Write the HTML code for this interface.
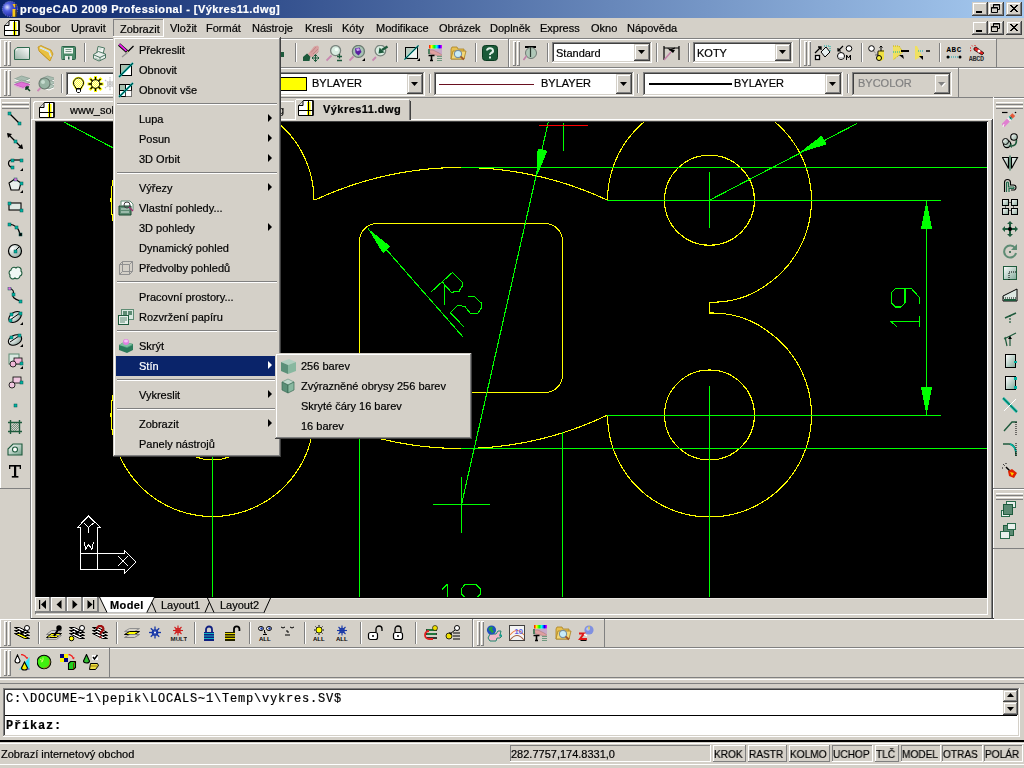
<!DOCTYPE html><html><head><meta charset="utf-8"><style>
html,body{margin:0;padding:0;width:1024px;height:768px;overflow:hidden;background:#D4D0C8;position:relative}
.a{position:absolute;display:block}
.t{position:absolute;white-space:nowrap;will-change:transform;-webkit-text-stroke:0.2px currentColor;}
</style></head><body>
<div class="a" style="left:0px;top:0px;width:1024px;height:18px;background:linear-gradient(to right,#0A246A,#A6CAF0);"></div>
<svg class="a" style="left:1px;top:0px;" width="19" height="18" viewBox="0 0 19 18"><defs><radialGradient id="gl" cx="32%" cy="38%" r="70%"><stop offset="0" stop-color="#E0E4FF"/><stop offset="0.35" stop-color="#5060E0"/><stop offset="1" stop-color="#1820A0"/></radialGradient></defs>
<circle cx="9" cy="9" r="7.6" fill="url(#gl)" stroke="#8890D0" stroke-width="0.9" stroke-dasharray="1 1"/><path d="M11.5 4h4l-2 4z" fill="#F0C020"/><path d="M14 4.5l1.5-0.5-1.5 3.5z" fill="#604000"/><rect x="11.5" y="9" width="3" height="7.8" fill="#F8C818"/><rect x="14.5" y="10" width="1.2" height="6.8" fill="#504010"/></svg>
<div class="t" style="left:20px;top:3px;font-size:11px;line-height:13px;color:#fff;font-family:'Liberation Sans';font-weight:bold;letter-spacing:0.45px;">progeCAD 2009 Professional - [Výkres11.dwg]</div>
<div class="a" style="left:972px;top:2px;width:16px;height:14px;background:#D4D0C8;"></div>
<div class="a" style="left:973px;top:3px;width:14px;height:1px;background:#FFFFFF;"></div>
<div class="a" style="left:973px;top:3px;width:1px;height:12px;background:#FFFFFF;"></div>
<div class="a" style="left:972px;top:15px;width:16px;height:1px;background:#404040;"></div>
<div class="a" style="left:987px;top:2px;width:1px;height:14px;background:#404040;"></div>
<div class="a" style="left:973px;top:14px;width:14px;height:1px;background:#808080;"></div>
<div class="a" style="left:986px;top:3px;width:1px;height:12px;background:#808080;"></div>
<div class="a" style="left:976px;top:11px;width:6px;height:2px;background:#000;"></div>
<div class="a" style="left:988px;top:2px;width:16px;height:14px;background:#D4D0C8;"></div>
<div class="a" style="left:989px;top:3px;width:14px;height:1px;background:#FFFFFF;"></div>
<div class="a" style="left:989px;top:3px;width:1px;height:12px;background:#FFFFFF;"></div>
<div class="a" style="left:988px;top:15px;width:16px;height:1px;background:#404040;"></div>
<div class="a" style="left:1003px;top:2px;width:1px;height:14px;background:#404040;"></div>
<div class="a" style="left:989px;top:14px;width:14px;height:1px;background:#808080;"></div>
<div class="a" style="left:1002px;top:3px;width:1px;height:12px;background:#808080;"></div>
<svg class="a" style="left:988px;top:2px;" width="16" height="14" viewBox="0 0 16 14"><path d="M5.5 2.5h6v5h-6z" stroke="#000" fill="none"/><path d="M5 3h7" stroke="#000"/><path d="M3.5 5.5h6v5h-6z" fill="#D4D0C8" stroke="#000"/><path d="M3 6h7" stroke="#000"/></svg>
<div class="a" style="left:1006px;top:2px;width:16px;height:14px;background:#D4D0C8;"></div>
<div class="a" style="left:1007px;top:3px;width:14px;height:1px;background:#FFFFFF;"></div>
<div class="a" style="left:1007px;top:3px;width:1px;height:12px;background:#FFFFFF;"></div>
<div class="a" style="left:1006px;top:15px;width:16px;height:1px;background:#404040;"></div>
<div class="a" style="left:1021px;top:2px;width:1px;height:14px;background:#404040;"></div>
<div class="a" style="left:1007px;top:14px;width:14px;height:1px;background:#808080;"></div>
<div class="a" style="left:1020px;top:3px;width:1px;height:12px;background:#808080;"></div>
<svg class="a" style="left:1006px;top:2px;" width="16" height="14" viewBox="0 0 16 14"><path d="M4 3l7 7M5 3l7 7M11 3l-7 7M12 3l-7 7" stroke="#000" stroke-width="1" shape-rendering="crispEdges"/></svg>
<div class="a" style="left:0px;top:18px;width:1024px;height:20px;background:#D4D0C8;"></div>
<svg class="a" style="left:4px;top:20px;" width="16" height="16" viewBox="0 0 16 16"><path d="M0.5 15.5V5.5l5-5h9.5v15z" fill="#fff" stroke="#000"/><path d="M5 1v4.5h-4.5" fill="#D8D8D8" stroke="#000"/><rect x="9" y="2" width="3.5" height="13" fill="#FFFF00"/><path d="M10.5 1v14.5M1 10.5h14" stroke="#000"/><path d="M15 0.5v15" stroke="#000" stroke-width="1.6"/><path d="M5.5 0.5h9.5" stroke="#000"/></svg>
<div class="a" style="left:113px;top:19px;width:51px;height:18px;background:#D4D0C8;"></div>
<div class="a" style="left:113px;top:19px;width:51px;height:1px;background:#808080;"></div>
<div class="a" style="left:113px;top:19px;width:1px;height:18px;background:#808080;"></div>
<div class="a" style="left:113px;top:36px;width:51px;height:1px;background:#FFFFFF;"></div>
<div class="a" style="left:163px;top:19px;width:1px;height:18px;background:#FFFFFF;"></div>
<div class="t" style="left:25px;top:22px;font-size:11px;line-height:13px;color:#000;font-family:'Liberation Sans';">Soubor</div>
<div class="t" style="left:71px;top:22px;font-size:11px;line-height:13px;color:#000;font-family:'Liberation Sans';">Upravit</div>
<div class="t" style="left:170px;top:22px;font-size:11px;line-height:13px;color:#000;font-family:'Liberation Sans';">Vložit</div>
<div class="t" style="left:206px;top:22px;font-size:11px;line-height:13px;color:#000;font-family:'Liberation Sans';">Formát</div>
<div class="t" style="left:252px;top:22px;font-size:11px;line-height:13px;color:#000;font-family:'Liberation Sans';">Nástroje</div>
<div class="t" style="left:305px;top:22px;font-size:11px;line-height:13px;color:#000;font-family:'Liberation Sans';">Kresli</div>
<div class="t" style="left:342px;top:22px;font-size:11px;line-height:13px;color:#000;font-family:'Liberation Sans';">Kóty</div>
<div class="t" style="left:376px;top:22px;font-size:11px;line-height:13px;color:#000;font-family:'Liberation Sans';">Modifikace</div>
<div class="t" style="left:439px;top:22px;font-size:11px;line-height:13px;color:#000;font-family:'Liberation Sans';">Obrázek</div>
<div class="t" style="left:490px;top:22px;font-size:11px;line-height:13px;color:#000;font-family:'Liberation Sans';">Doplněk</div>
<div class="t" style="left:540px;top:22px;font-size:11px;line-height:13px;color:#000;font-family:'Liberation Sans';">Express</div>
<div class="t" style="left:591px;top:22px;font-size:11px;line-height:13px;color:#000;font-family:'Liberation Sans';">Okno</div>
<div class="t" style="left:627px;top:22px;font-size:11px;line-height:13px;color:#000;font-family:'Liberation Sans';">Nápověda</div>
<div class="t" style="left:120px;top:23px;font-size:11px;line-height:13px;color:#000;font-family:'Liberation Sans';">Zobrazit</div>
<div class="a" style="left:972px;top:21px;width:16px;height:14px;background:#D4D0C8;"></div>
<div class="a" style="left:973px;top:22px;width:14px;height:1px;background:#FFFFFF;"></div>
<div class="a" style="left:973px;top:22px;width:1px;height:12px;background:#FFFFFF;"></div>
<div class="a" style="left:972px;top:34px;width:16px;height:1px;background:#404040;"></div>
<div class="a" style="left:987px;top:21px;width:1px;height:14px;background:#404040;"></div>
<div class="a" style="left:973px;top:33px;width:14px;height:1px;background:#808080;"></div>
<div class="a" style="left:986px;top:22px;width:1px;height:12px;background:#808080;"></div>
<div class="a" style="left:976px;top:30px;width:6px;height:2px;background:#000;"></div>
<div class="a" style="left:988px;top:21px;width:16px;height:14px;background:#D4D0C8;"></div>
<div class="a" style="left:989px;top:22px;width:14px;height:1px;background:#FFFFFF;"></div>
<div class="a" style="left:989px;top:22px;width:1px;height:12px;background:#FFFFFF;"></div>
<div class="a" style="left:988px;top:34px;width:16px;height:1px;background:#404040;"></div>
<div class="a" style="left:1003px;top:21px;width:1px;height:14px;background:#404040;"></div>
<div class="a" style="left:989px;top:33px;width:14px;height:1px;background:#808080;"></div>
<div class="a" style="left:1002px;top:22px;width:1px;height:12px;background:#808080;"></div>
<svg class="a" style="left:988px;top:21px;" width="16" height="14" viewBox="0 0 16 14"><path d="M5.5 2.5h6v5h-6z" stroke="#000" fill="none"/><path d="M5 3h7" stroke="#000"/><path d="M3.5 5.5h6v5h-6z" fill="#D4D0C8" stroke="#000"/><path d="M3 6h7" stroke="#000"/></svg>
<div class="a" style="left:1006px;top:21px;width:16px;height:14px;background:#D4D0C8;"></div>
<div class="a" style="left:1007px;top:22px;width:14px;height:1px;background:#FFFFFF;"></div>
<div class="a" style="left:1007px;top:22px;width:1px;height:12px;background:#FFFFFF;"></div>
<div class="a" style="left:1006px;top:34px;width:16px;height:1px;background:#404040;"></div>
<div class="a" style="left:1021px;top:21px;width:1px;height:14px;background:#404040;"></div>
<div class="a" style="left:1007px;top:33px;width:14px;height:1px;background:#808080;"></div>
<div class="a" style="left:1020px;top:22px;width:1px;height:12px;background:#808080;"></div>
<svg class="a" style="left:1006px;top:21px;" width="16" height="14" viewBox="0 0 16 14"><path d="M4 3l7 7M5 3l7 7M11 3l-7 7M12 3l-7 7" stroke="#000" stroke-width="1" shape-rendering="crispEdges"/></svg>
<div class="a" style="left:0px;top:38px;width:1024px;height:1px;background:#808080;"></div>
<div class="a" style="left:0px;top:67px;width:1024px;height:1px;background:#808080;"></div>
<div class="a" style="left:0px;top:68px;width:1024px;height:1px;background:#FFFFFF;"></div>
<div class="a" style="left:0px;top:97px;width:1024px;height:1px;background:#808080;"></div>
<div class="a" style="left:0px;top:39px;width:509px;height:29px;background:#D4D0C8;"></div>
<div class="a" style="left:0px;top:39px;width:509px;height:1px;background:#FFFFFF;"></div>
<div class="a" style="left:0px;top:39px;width:1px;height:29px;background:#FFFFFF;"></div>
<div class="a" style="left:0px;top:67px;width:509px;height:1px;background:#808080;"></div>
<div class="a" style="left:508px;top:39px;width:1px;height:29px;background:#808080;"></div>
<div class="a" style="left:4px;top:41px;width:1px;height:25px;background:#FFFFFF;"></div>
<div class="a" style="left:5px;top:41px;width:1px;height:25px;background:#D4D0C8;"></div>
<div class="a" style="left:6px;top:41px;width:1px;height:25px;background:#808080;"></div>
<div class="a" style="left:4px;top:41px;width:3px;height:1px;background:#FFFFFF;"></div>
<div class="a" style="left:4px;top:65px;width:3px;height:1px;background:#808080;"></div>
<div class="a" style="left:8px;top:41px;width:1px;height:25px;background:#FFFFFF;"></div>
<div class="a" style="left:9px;top:41px;width:1px;height:25px;background:#D4D0C8;"></div>
<div class="a" style="left:10px;top:41px;width:1px;height:25px;background:#808080;"></div>
<div class="a" style="left:8px;top:41px;width:3px;height:1px;background:#FFFFFF;"></div>
<div class="a" style="left:8px;top:65px;width:3px;height:1px;background:#808080;"></div>
<svg class="a" style="left:14px;top:47px;" width="17" height="17" viewBox="0 0 17 17"><defs><linearGradient id="gnew" x1="0" y1="1" x2="1" y2="0"><stop offset="0" stop-color="#98B0A4"/><stop offset="1" stop-color="#FFFFFF"/></linearGradient></defs><path d="M3 0.5H15.5V12.5H0.5V3z" fill="url(#gnew)" stroke="#2E6A4E"/><circle cx="2.8" cy="2.8" r="0.8" fill="#fff"/></svg>
<svg class="a" style="left:37px;top:45px;" width="17" height="17" viewBox="0 0 17 17"><path d="M1 2L4 0.5 7 2 14 5 16 9 13 16 2 6z" fill="#E8C040" stroke="#C09020" stroke-width="0.8"/><path d="M3 2.5l9 4 2 5" fill="none" stroke="#F0F8FF" stroke-width="1.6"/><path d="M3 2.5l9 4 2 5" fill="none" stroke="#A0C8E0" stroke-width="0.6"/><path d="M2 6l11 10" stroke="#C89820" stroke-width="0.8"/></svg>
<svg class="a" style="left:61px;top:46px;" width="17" height="17" viewBox="0 0 17 17"><rect x="0.5" y="0.5" width="14" height="13" rx="1" fill="#4A8A68" stroke="#2A6048"/><rect x="3" y="2" width="9" height="5.5" fill="#EEF4F0"/><path d="M4.5 3.5h6M4.5 5.5h6" stroke="#7A9A8A"/><rect x="4" y="10" width="7" height="4" fill="#E8ECEA"/><rect x="7" y="10.5" width="1.5" height="3" fill="#2A6048"/><path d="M1 1v12" stroke="#8AC0A4"/></svg>
<div class="a" style="left:84px;top:43px;width:1px;height:19px;background:#808080;"></div>
<div class="a" style="left:85px;top:43px;width:1px;height:19px;background:#FFFFFF;"></div>
<svg class="a" style="left:93px;top:45px;" width="17" height="17" viewBox="0 0 17 17"><path d="M5 1.5l6.5 1.5-2 8-6-1.5z" fill="#F4F8F4" stroke="#3A6A54" stroke-width="0.9"/><path d="M5.5 4h3" stroke="#B8C8C0"/><path d="M0.5 9.5l5-3 7 2.5v4l-6.5 3-5.5-2.5z" fill="#E8EEEA" stroke="#3A6A54" stroke-width="0.9"/><path d="M1 10l6 2.5 6-3" fill="none" stroke="#3A6A54" stroke-width="0.9"/><path d="M7 12.5v3.5" stroke="#3A6A54" stroke-width="0.8"/><path d="M2 13l4.5 2" stroke="#A8C0B4"/></svg>
<div class="a" style="left:281px;top:52px;width:3px;height:5px;background:#1E5A3C;"></div>
<div class="a" style="left:295px;top:43px;width:1px;height:19px;background:#808080;"></div>
<div class="a" style="left:296px;top:43px;width:1px;height:19px;background:#FFFFFF;"></div>
<svg class="a" style="left:303px;top:45px;" width="17" height="17" viewBox="0 0 17 17"><path d="M0 12L4 8.5 7.5 11 6.5 16H0z" fill="#1E5A3C"/><path d="M5 9L11 1.5 14.5 0.5 16 2 15.5 6 12 9 9.5 12 7 11.5z" fill="#D8A0A0"/><path d="M8 7.5l5-5.5M10 9l5-5M11.5 10.5l4-4" stroke="#B88080" stroke-width="0.7"/><path d="M12.5 9.5v7M9 13h7" stroke="#1E5A3C" stroke-width="1.2"/><path d="M11 11l1.5-1.5 1.5 1.5M11 15l1.5 1.5 1.5-1.5M10.5 11.5L9 13l1.5 1.5M14.5 11.5L16 13l-1.5 1.5" fill="none" stroke="#1E5A3C"/></svg>
<svg class="a" style="left:326px;top:45px;" width="17" height="17" viewBox="0 0 17 17"><circle cx="9.6" cy="5.6" r="5" fill="#D8ECE0" stroke="#7A847E" stroke-width="1.3"/><circle cx="10.5" cy="4.5" r="1.8" fill="#F4FFF8"/><path d="M0.5 15.5L5.5 10.5" stroke="#C888B0" stroke-width="1.8"/><path d="M11 11.5h5M13.5 9v4.5M11 15.5h5" stroke="#1E5A3C" stroke-width="1.3"/></svg>
<svg class="a" style="left:349px;top:45px;" width="17" height="17" viewBox="0 0 17 17"><circle cx="9.4" cy="6.4" r="6" fill="#A8C4B4" stroke="#6A7A70" stroke-width="1.3"/><path d="M6 3.5L10.5 2.5 12.5 7 9.5 10.5 6.5 8z" fill="#5A20A0"/><path d="M7 3.8l3-0.6 1 2-3 1z" fill="#C8A8F0"/><path d="M0.5 15.5L4.5 11.5" stroke="#C888B0" stroke-width="1.8"/><path d="M13 16h3v-3z" fill="#000"/></svg>
<svg class="a" style="left:372px;top:45px;" width="17" height="17" viewBox="0 0 17 17"><circle cx="8.4" cy="5.6" r="5.3" fill="#D8ECE0" stroke="#7A847E" stroke-width="1.3"/><path d="M15.5 1.5L10 5" stroke="#1E5A3C" stroke-width="2.5"/><path d="M6.5 8.5L7.5 2.5 12.5 7.5z" fill="#1E5A3C"/><path d="M0.5 15.5L4 12" stroke="#C888B0" stroke-width="1.8"/></svg>
<div class="a" style="left:396px;top:43px;width:1px;height:19px;background:#808080;"></div>
<div class="a" style="left:397px;top:43px;width:1px;height:19px;background:#FFFFFF;"></div>
<svg class="a" style="left:404px;top:45px;" width="17" height="17" viewBox="0 0 17 17"><rect x="1.5" y="2.5" width="12" height="11" fill="#B8CCC0" stroke="#000"/><path d="M3 12l10-9v10z" fill="#F0F4F0"/><path d="M0.5 14.5l14-14" stroke="#00A8A0" stroke-width="1.5"/><path d="M0.5 14.5l14-14" stroke="#000" stroke-width="0.6"/><path d="M13 16h3v-3z" fill="#000"/></svg>
<svg class="a" style="left:427px;top:45px;" width="17" height="17" viewBox="0 0 17 17"><defs><linearGradient id="rb2"><stop offset="0" stop-color="#F00"/><stop offset=".2" stop-color="#FF0"/><stop offset=".4" stop-color="#0F0"/><stop offset=".6" stop-color="#0FF"/><stop offset=".8" stop-color="#00F"/><stop offset="1" stop-color="#F0F"/></linearGradient></defs><rect x="2" y="0" width="13" height="3.5" fill="url(#rb2)"/><rect x="1" y="4" width="14" height="5" fill="#C8A8C8"/><path d="M1 5h5l6 3 3 2-2 1-9-2z" fill="#E0A0A0" stroke="#A07070" stroke-width="0.5"/><rect x="1" y="4" width="2" height="5" fill="#508060"/><path d="M1.5 10.5h6M4.5 10.5v5M3 15.5h3" stroke="#000" stroke-width="1.6"/><path d="M10 11.5h5M10 13.5h5M10 15.5h5" stroke="#709880" stroke-width="1.2"/></svg>
<svg class="a" style="left:450px;top:45px;" width="17" height="17" viewBox="0 0 17 17"><path d="M1 4l1-2h5l1 2h6v10H1z" fill="#E8C050" stroke="#A88020" stroke-width="0.8"/><path d="M3 6h13l-2 8H1z" fill="#F4D878" stroke="#A88020" stroke-width="0.8"/><circle cx="8" cy="9" r="3.6" fill="#C8ECF8" stroke="#7890A0" stroke-width="1.1"/><path d="M10.5 11.5l3.5 3" stroke="#A05828" stroke-width="1.8"/></svg>
<div class="a" style="left:475px;top:43px;width:1px;height:19px;background:#808080;"></div>
<div class="a" style="left:476px;top:43px;width:1px;height:19px;background:#FFFFFF;"></div>
<svg class="a" style="left:482px;top:45px;" width="17" height="17" viewBox="0 0 17 17"><rect x="0.5" y="0.5" width="15" height="15" rx="3" fill="#1A5A38" stroke="#0A3A20"/><path d="M5 5.5a3 2.5 0 1 1 4 2.5c-1 .6-1 1.2-1 2" fill="none" stroke="#E0F0E8" stroke-width="2"/><rect x="7" y="11.5" width="2" height="2" fill="#E0F0E8"/></svg>
<div class="a" style="left:509px;top:39px;width:291px;height:29px;background:#D4D0C8;"></div>
<div class="a" style="left:509px;top:39px;width:291px;height:1px;background:#FFFFFF;"></div>
<div class="a" style="left:509px;top:39px;width:1px;height:29px;background:#FFFFFF;"></div>
<div class="a" style="left:509px;top:67px;width:291px;height:1px;background:#808080;"></div>
<div class="a" style="left:799px;top:39px;width:1px;height:29px;background:#808080;"></div>
<div class="a" style="left:513px;top:41px;width:1px;height:25px;background:#FFFFFF;"></div>
<div class="a" style="left:514px;top:41px;width:1px;height:25px;background:#D4D0C8;"></div>
<div class="a" style="left:515px;top:41px;width:1px;height:25px;background:#808080;"></div>
<div class="a" style="left:513px;top:41px;width:3px;height:1px;background:#FFFFFF;"></div>
<div class="a" style="left:513px;top:65px;width:3px;height:1px;background:#808080;"></div>
<div class="a" style="left:517px;top:41px;width:1px;height:25px;background:#FFFFFF;"></div>
<div class="a" style="left:518px;top:41px;width:1px;height:25px;background:#D4D0C8;"></div>
<div class="a" style="left:519px;top:41px;width:1px;height:25px;background:#808080;"></div>
<div class="a" style="left:517px;top:41px;width:3px;height:1px;background:#FFFFFF;"></div>
<div class="a" style="left:517px;top:65px;width:3px;height:1px;background:#808080;"></div>
<svg class="a" style="left:523px;top:45px;" width="17" height="17" viewBox="0 0 17 17"><path d="M2 1h11v2H2z" fill="#000"/><circle cx="8" cy="8" r="5.5" fill="#B0C8B8" stroke="#707A74"/><path d="M7.5 2v10" stroke="#2A3A30" stroke-width="1.2"/><path d="M0.5 15l3-4" stroke="#C080A8" stroke-width="1.6"/></svg>
<div class="a" style="left:547px;top:43px;width:1px;height:19px;background:#808080;"></div>
<div class="a" style="left:548px;top:43px;width:1px;height:19px;background:#FFFFFF;"></div>
<div class="a" style="left:552px;top:42px;width:100px;height:21px;background:#FFFFFF;"></div>
<div class="a" style="left:552px;top:42px;width:99px;height:1px;background:#808080;"></div>
<div class="a" style="left:552px;top:42px;width:1px;height:20px;background:#808080;"></div>
<div class="a" style="left:553px;top:43px;width:97px;height:1px;background:#404040;"></div>
<div class="a" style="left:553px;top:43px;width:1px;height:18px;background:#404040;"></div>
<div class="a" style="left:552px;top:62px;width:100px;height:1px;background:#FFFFFF;"></div>
<div class="a" style="left:651px;top:42px;width:1px;height:21px;background:#FFFFFF;"></div>
<div class="a" style="left:553px;top:61px;width:98px;height:1px;background:#D4D0C8;"></div>
<div class="a" style="left:650px;top:43px;width:1px;height:19px;background:#D4D0C8;"></div>
<div class="a" style="left:634px;top:44px;width:16px;height:17px;background:#D4D0C8;"></div>
<div class="a" style="left:635px;top:45px;width:14px;height:1px;background:#FFFFFF;"></div>
<div class="a" style="left:635px;top:45px;width:1px;height:15px;background:#FFFFFF;"></div>
<div class="a" style="left:634px;top:60px;width:16px;height:1px;background:#404040;"></div>
<div class="a" style="left:649px;top:44px;width:1px;height:17px;background:#404040;"></div>
<div class="a" style="left:635px;top:59px;width:14px;height:1px;background:#808080;"></div>
<div class="a" style="left:648px;top:45px;width:1px;height:15px;background:#808080;"></div>
<svg class="a" style="left:634px;top:44px;" width="16" height="17" viewBox="0 0 16 17"><path d="M4 6h7l-3.5 4z" fill="#000"/></svg>
<div class="t" style="left:556px;top:47px;font-size:11px;line-height:13px;color:#000;font-family:'Liberation Sans';">Standard</div>
<div class="a" style="left:656px;top:43px;width:1px;height:19px;background:#808080;"></div>
<div class="a" style="left:657px;top:43px;width:1px;height:19px;background:#FFFFFF;"></div>
<svg class="a" style="left:663px;top:45px;" width="17" height="17" viewBox="0 0 17 17"><path d="M1 1v14M16 1v14M1 3h15" stroke="#000" stroke-width="1.2"/><path d="M4 3l8 2-2 3z" fill="#000"/><path d="M6 5l6-2" stroke="#000"/><path d="M1 15l7-8" stroke="#C080A8" stroke-width="1.5"/></svg>
<div class="a" style="left:688px;top:43px;width:1px;height:19px;background:#808080;"></div>
<div class="a" style="left:689px;top:43px;width:1px;height:19px;background:#FFFFFF;"></div>
<div class="a" style="left:693px;top:42px;width:100px;height:21px;background:#FFFFFF;"></div>
<div class="a" style="left:693px;top:42px;width:99px;height:1px;background:#808080;"></div>
<div class="a" style="left:693px;top:42px;width:1px;height:20px;background:#808080;"></div>
<div class="a" style="left:694px;top:43px;width:97px;height:1px;background:#404040;"></div>
<div class="a" style="left:694px;top:43px;width:1px;height:18px;background:#404040;"></div>
<div class="a" style="left:693px;top:62px;width:100px;height:1px;background:#FFFFFF;"></div>
<div class="a" style="left:792px;top:42px;width:1px;height:21px;background:#FFFFFF;"></div>
<div class="a" style="left:694px;top:61px;width:98px;height:1px;background:#D4D0C8;"></div>
<div class="a" style="left:791px;top:43px;width:1px;height:19px;background:#D4D0C8;"></div>
<div class="a" style="left:775px;top:44px;width:16px;height:17px;background:#D4D0C8;"></div>
<div class="a" style="left:776px;top:45px;width:14px;height:1px;background:#FFFFFF;"></div>
<div class="a" style="left:776px;top:45px;width:1px;height:15px;background:#FFFFFF;"></div>
<div class="a" style="left:775px;top:60px;width:16px;height:1px;background:#404040;"></div>
<div class="a" style="left:790px;top:44px;width:1px;height:17px;background:#404040;"></div>
<div class="a" style="left:776px;top:59px;width:14px;height:1px;background:#808080;"></div>
<div class="a" style="left:789px;top:45px;width:1px;height:15px;background:#808080;"></div>
<svg class="a" style="left:775px;top:44px;" width="16" height="17" viewBox="0 0 16 17"><path d="M4 6h7l-3.5 4z" fill="#000"/></svg>
<div class="t" style="left:697px;top:47px;font-size:11px;line-height:13px;color:#000;font-family:'Liberation Sans';">KOTY</div>
<div class="a" style="left:800px;top:39px;width:197px;height:29px;background:#D4D0C8;"></div>
<div class="a" style="left:800px;top:39px;width:197px;height:1px;background:#FFFFFF;"></div>
<div class="a" style="left:800px;top:39px;width:1px;height:29px;background:#FFFFFF;"></div>
<div class="a" style="left:800px;top:67px;width:197px;height:1px;background:#808080;"></div>
<div class="a" style="left:996px;top:39px;width:1px;height:29px;background:#808080;"></div>
<div class="a" style="left:804px;top:41px;width:1px;height:25px;background:#FFFFFF;"></div>
<div class="a" style="left:805px;top:41px;width:1px;height:25px;background:#D4D0C8;"></div>
<div class="a" style="left:806px;top:41px;width:1px;height:25px;background:#808080;"></div>
<div class="a" style="left:804px;top:41px;width:3px;height:1px;background:#FFFFFF;"></div>
<div class="a" style="left:804px;top:65px;width:3px;height:1px;background:#808080;"></div>
<div class="a" style="left:808px;top:41px;width:1px;height:25px;background:#FFFFFF;"></div>
<div class="a" style="left:809px;top:41px;width:1px;height:25px;background:#D4D0C8;"></div>
<div class="a" style="left:810px;top:41px;width:1px;height:25px;background:#808080;"></div>
<div class="a" style="left:808px;top:41px;width:3px;height:1px;background:#FFFFFF;"></div>
<div class="a" style="left:808px;top:65px;width:3px;height:1px;background:#808080;"></div>
<svg class="a" style="left:814px;top:45px;" width="17" height="17" viewBox="0 0 17 17"><path d="M1 8l6-6M4 2h3v3" stroke="#000" stroke-width="1.3" fill="none"/><rect x="1.5" y="10.5" width="4" height="4" fill="#fff" stroke="#000" stroke-width="1.3"/><path d="M12 2l4 5-5 5-4-5z" fill="#E8F0F0" stroke="#000"/><path d="M10 1h6v6" stroke="#00B0A8" stroke-dasharray="1 1" fill="none"/></svg>
<svg class="a" style="left:836px;top:45px;" width="17" height="17" viewBox="0 0 17 17"><path d="M7 1l-5 5M2 3v3h3" stroke="#000" stroke-width="1.2" fill="none"/><circle cx="13" cy="3.5" r="2.8" fill="#fff" stroke="#000"/><circle cx="5" cy="11" r="3.5" fill="#fff" stroke="#000"/><path d="M2 12a3.5 3.5 0 0 0 6 0" fill="#D0D0D0"/><path d="M10.5 15v-5l2 3 2-3v5" stroke="#000" fill="none" stroke-width="1"/></svg>
<div class="a" style="left:861px;top:43px;width:1px;height:19px;background:#808080;"></div>
<div class="a" style="left:862px;top:43px;width:1px;height:19px;background:#FFFFFF;"></div>
<svg class="a" style="left:868px;top:45px;" width="17" height="17" viewBox="0 0 17 17"><circle cx="3.5" cy="3.5" r="2.8" fill="#fff" stroke="#000"/><path d="M5.5 6l5 5" stroke="#606060" stroke-dasharray="1 1"/><path d="M7 10h3v-3" fill="none" stroke="#606060"/><path d="M10 6v9l3 1 3-2V5z" fill="#F0E040"/><path d="M10 6h6M10 6v9" stroke="#000" stroke-width="0.8" fill="none"/><circle cx="11" cy="13" r="2.5" fill="#F8F040" stroke="#000"/><path d="M13 1v5M11.5 2.5L13 1l1.5 1.5" stroke="#000" fill="none"/></svg>
<svg class="a" style="left:892px;top:45px;" width="17" height="17" viewBox="0 0 17 17"><path d="M1 1h6l4 6-10 8z" fill="#F0E060"/><path d="M1 1h6l4 6-10 8" fill="none" stroke="#C8B000" stroke-dasharray="1 1"/><path d="M1 7h8" stroke="#00B0B0" stroke-dasharray="1 1"/><path d="M9 6h8" stroke="#000" stroke-width="2"/><path d="M7 10l5 4-1-4z" fill="#000"/></svg>
<svg class="a" style="left:914px;top:45px;" width="17" height="17" viewBox="0 0 17 17"><path d="M1 1h2l5 10-7 4z" fill="#F0E060"/><path d="M4 6h6" stroke="#00B0B0" stroke-dasharray="1 1"/><path d="M12 6h4" stroke="#000" stroke-width="1.5"/><path d="M5 11l4 4v-4z" fill="#000"/></svg>
<div class="a" style="left:939px;top:43px;width:1px;height:19px;background:#808080;"></div>
<div class="a" style="left:940px;top:43px;width:1px;height:19px;background:#FFFFFF;"></div>
<svg class="a" style="left:946px;top:45px;" width="17" height="17" viewBox="0 0 17 17"><text x="0.5" y="7" font-size="7.5" font-family="Liberation Mono" font-weight="bold" letter-spacing="0.6" fill="#000">ABC</text><path d="M3 12h10" stroke="#00A0B0" stroke-dasharray="1 1"/><circle cx="2" cy="12" r="1.5"/><circle cx="14" cy="12" r="1.5"/></svg>
<svg class="a" style="left:969px;top:45px;" width="17" height="17" viewBox="0 0 17 17"><path d="M1 3h2M3 0.5l1 1.5M6 0v2M1 6l2-1" stroke="#E00000" stroke-width="1" stroke-dasharray="1 1"/><path d="M5 3l2-1 8 6-2 2-8-5z" fill="#E82020" stroke="#000" stroke-width="0.7"/><circle cx="10" cy="6" r="1.5" fill="#fff"/><text x="-0.3" y="16" font-size="6.8" font-family="Liberation Mono" font-weight="bold" letter-spacing="-0.3" fill="#303030">ABCD</text></svg>
<div class="a" style="left:0px;top:68px;width:959px;height:30px;background:#D4D0C8;"></div>
<div class="a" style="left:0px;top:68px;width:959px;height:1px;background:#FFFFFF;"></div>
<div class="a" style="left:0px;top:68px;width:1px;height:30px;background:#FFFFFF;"></div>
<div class="a" style="left:0px;top:97px;width:959px;height:1px;background:#808080;"></div>
<div class="a" style="left:958px;top:68px;width:1px;height:30px;background:#808080;"></div>
<div class="a" style="left:4px;top:70px;width:1px;height:26px;background:#FFFFFF;"></div>
<div class="a" style="left:5px;top:70px;width:1px;height:26px;background:#D4D0C8;"></div>
<div class="a" style="left:6px;top:70px;width:1px;height:26px;background:#808080;"></div>
<div class="a" style="left:4px;top:70px;width:3px;height:1px;background:#FFFFFF;"></div>
<div class="a" style="left:4px;top:95px;width:3px;height:1px;background:#808080;"></div>
<div class="a" style="left:8px;top:70px;width:1px;height:26px;background:#FFFFFF;"></div>
<div class="a" style="left:9px;top:70px;width:1px;height:26px;background:#D4D0C8;"></div>
<div class="a" style="left:10px;top:70px;width:1px;height:26px;background:#808080;"></div>
<div class="a" style="left:8px;top:70px;width:3px;height:1px;background:#FFFFFF;"></div>
<div class="a" style="left:8px;top:95px;width:3px;height:1px;background:#808080;"></div>
<svg class="a" style="left:14px;top:75px;" width="17" height="17" viewBox="0 0 17 17"><path d="M0.5 4.0L7.5 1.0L16 3.5L9 6.5z" fill="#A8BCB0" stroke="#8AA094" stroke-width="0.8"/><path d="M0.5 4.5L9 7.5L16 4.5" fill="none" stroke="#fff" stroke-width="1"/><path d="M0.5 8.0L7.5 5.0L16 7.5L9 10.5z" fill="#B4C8BC" stroke="#8AA094" stroke-width="0.8"/><path d="M0.5 8.5L9 11.5L16 8.5" fill="none" stroke="#fff" stroke-width="1"/><path d="M0.5 9.5L7.5 7L16 9.5L9 12.5z" fill="#E070D8" stroke="#C050B8" stroke-width="0.8"/><path d="M0.5 10.5L9 13.5L16 10.5" fill="none" stroke="#E8A0E0" stroke-width="1"/><path d="M12.5 12.5l3.5 3.5M12 12h3M12 12v3" stroke="#0A3A20" stroke-width="1.5"/></svg>
<svg class="a" style="left:37px;top:75px;" width="17" height="17" viewBox="0 0 17 17"><g transform="translate(3 0)"><path d="M0.5 4.0L7.5 1.0L16 3.5L9 6.5z" fill="#A8BCB0" stroke="#8AA094" stroke-width="0.8"/><path d="M0.5 4.5L9 7.5L16 4.5" fill="none" stroke="#fff" stroke-width="1"/><path d="M0.5 8.0L7.5 5.0L16 7.5L9 10.5z" fill="#B4C8BC" stroke="#8AA094" stroke-width="0.8"/><path d="M0.5 8.5L9 11.5L16 8.5" fill="none" stroke="#fff" stroke-width="1"/><path d="M0.5 11.5L7.5 8.5L16 11L9 14z" fill="#B4C8BC" stroke="#8AA094" stroke-width="0.8"/><path d="M0.5 12L9 15L16 12" fill="none" stroke="#fff" stroke-width="1"/></g><circle cx="7.5" cy="8.5" r="5.5" fill="#98B4A4" stroke="#6A7A70" stroke-width="1.1"/><circle cx="6" cy="7" r="2" fill="#C8DCD0"/><path d="M0.5 16L3.5 13" stroke="#D088B8" stroke-width="1.8"/></svg>
<div class="a" style="left:61px;top:74px;width:1px;height:19px;background:#808080;"></div>
<div class="a" style="left:62px;top:74px;width:1px;height:19px;background:#FFFFFF;"></div>
<div class="a" style="left:66px;top:72px;width:190px;height:24px;background:#FFFFFF;"></div>
<div class="a" style="left:66px;top:72px;width:189px;height:1px;background:#808080;"></div>
<div class="a" style="left:66px;top:72px;width:1px;height:23px;background:#808080;"></div>
<div class="a" style="left:67px;top:73px;width:187px;height:1px;background:#404040;"></div>
<div class="a" style="left:67px;top:73px;width:1px;height:21px;background:#404040;"></div>
<div class="a" style="left:66px;top:95px;width:190px;height:1px;background:#FFFFFF;"></div>
<div class="a" style="left:255px;top:72px;width:1px;height:24px;background:#FFFFFF;"></div>
<div class="a" style="left:67px;top:94px;width:188px;height:1px;background:#D4D0C8;"></div>
<div class="a" style="left:254px;top:73px;width:1px;height:22px;background:#D4D0C8;"></div>
<div class="a" style="left:238px;top:74px;width:16px;height:20px;background:#D4D0C8;"></div>
<div class="a" style="left:239px;top:75px;width:14px;height:1px;background:#FFFFFF;"></div>
<div class="a" style="left:239px;top:75px;width:1px;height:18px;background:#FFFFFF;"></div>
<div class="a" style="left:238px;top:93px;width:16px;height:1px;background:#404040;"></div>
<div class="a" style="left:253px;top:74px;width:1px;height:20px;background:#404040;"></div>
<div class="a" style="left:239px;top:92px;width:14px;height:1px;background:#808080;"></div>
<div class="a" style="left:252px;top:75px;width:1px;height:18px;background:#808080;"></div>
<svg class="a" style="left:238px;top:74px;" width="16" height="20" viewBox="0 0 16 20"><path d="M4 8h7l-3.5 4z" fill="#000"/></svg>
<svg class="a" style="left:72px;top:76px;" width="14" height="17" viewBox="0 0 14 17"><defs><pattern id="chk" width="2" height="2" patternUnits="userSpaceOnUse"><rect width="2" height="2" fill="#FFFF40"/><rect width="1" height="1" fill="#FFFFE0"/><rect x="1" y="1" width="1" height="1" fill="#FFFFE0"/></pattern></defs><path d="M3 10.5a5 5 0 1 1 7 0l-1 2h-5z" fill="url(#chk)" stroke="#FFFF00" stroke-width="2.2"/><path d="M3 10.5a5 5 0 1 1 7 0l-1 2h-5z" fill="url(#chk)" stroke="#000" stroke-width="1"/><path d="M4.5 13h4v2.5l-1 1h-2l-1-1z" fill="#fff" stroke="#000"/></svg>
<svg class="a" style="left:87px;top:75px;" width="17" height="18" viewBox="0 0 17 18"><path d="M8.5 1v16M0.5 9h16M2.5 3l12 12M14.5 3l-12 12" stroke="#FFFF00" stroke-width="3"/><circle cx="8.5" cy="9" r="5" fill="#FFFF00"/><path d="M8.5 2v14M1.5 9h14M3.5 4l10 10M13.5 4l-10 10" stroke="#000" stroke-width="1.3"/><circle cx="8.5" cy="9" r="4.3" fill="url(#chk)" stroke="#000"/></svg>
<svg class="a" style="left:104px;top:76px;" width="11" height="17" viewBox="0 0 11 17"><path d="M6 1v14M1 4l10 8M11 4L1 12" stroke="#C0C0C0" stroke-width="1.2" stroke-dasharray="1.5 0.8"/><circle cx="6" cy="8" r="2.5" fill="none" stroke="#C0C0C0"/></svg>
<div class="a" style="left:262px;top:74px;width:1px;height:19px;background:#808080;"></div>
<div class="a" style="left:263px;top:74px;width:1px;height:19px;background:#FFFFFF;"></div>
<div class="a" style="left:267px;top:72px;width:158px;height:24px;background:#FFFFFF;"></div>
<div class="a" style="left:267px;top:72px;width:157px;height:1px;background:#808080;"></div>
<div class="a" style="left:267px;top:72px;width:1px;height:23px;background:#808080;"></div>
<div class="a" style="left:268px;top:73px;width:155px;height:1px;background:#404040;"></div>
<div class="a" style="left:268px;top:73px;width:1px;height:21px;background:#404040;"></div>
<div class="a" style="left:267px;top:95px;width:158px;height:1px;background:#FFFFFF;"></div>
<div class="a" style="left:424px;top:72px;width:1px;height:24px;background:#FFFFFF;"></div>
<div class="a" style="left:268px;top:94px;width:156px;height:1px;background:#D4D0C8;"></div>
<div class="a" style="left:423px;top:73px;width:1px;height:22px;background:#D4D0C8;"></div>
<div class="a" style="left:407px;top:74px;width:16px;height:20px;background:#D4D0C8;"></div>
<div class="a" style="left:408px;top:75px;width:14px;height:1px;background:#FFFFFF;"></div>
<div class="a" style="left:408px;top:75px;width:1px;height:18px;background:#FFFFFF;"></div>
<div class="a" style="left:407px;top:93px;width:16px;height:1px;background:#404040;"></div>
<div class="a" style="left:422px;top:74px;width:1px;height:20px;background:#404040;"></div>
<div class="a" style="left:408px;top:92px;width:14px;height:1px;background:#808080;"></div>
<div class="a" style="left:421px;top:75px;width:1px;height:18px;background:#808080;"></div>
<svg class="a" style="left:407px;top:74px;" width="16" height="20" viewBox="0 0 16 20"><path d="M4 8h7l-3.5 4z" fill="#000"/></svg>
<div class="a" style="left:272px;top:77px;width:35px;height:14px;background:#000;"></div>
<div class="a" style="left:273px;top:78px;width:33px;height:12px;background:#FFFF00;"></div>
<div class="t" style="left:312px;top:77px;font-size:11px;line-height:13px;color:#000;font-family:'Liberation Sans';">BYLAYER</div>
<div class="a" style="left:429px;top:74px;width:1px;height:19px;background:#808080;"></div>
<div class="a" style="left:430px;top:74px;width:1px;height:19px;background:#FFFFFF;"></div>
<div class="a" style="left:434px;top:72px;width:200px;height:24px;background:#FFFFFF;"></div>
<div class="a" style="left:434px;top:72px;width:199px;height:1px;background:#808080;"></div>
<div class="a" style="left:434px;top:72px;width:1px;height:23px;background:#808080;"></div>
<div class="a" style="left:435px;top:73px;width:197px;height:1px;background:#404040;"></div>
<div class="a" style="left:435px;top:73px;width:1px;height:21px;background:#404040;"></div>
<div class="a" style="left:434px;top:95px;width:200px;height:1px;background:#FFFFFF;"></div>
<div class="a" style="left:633px;top:72px;width:1px;height:24px;background:#FFFFFF;"></div>
<div class="a" style="left:435px;top:94px;width:198px;height:1px;background:#D4D0C8;"></div>
<div class="a" style="left:632px;top:73px;width:1px;height:22px;background:#D4D0C8;"></div>
<div class="a" style="left:616px;top:74px;width:16px;height:20px;background:#D4D0C8;"></div>
<div class="a" style="left:617px;top:75px;width:14px;height:1px;background:#FFFFFF;"></div>
<div class="a" style="left:617px;top:75px;width:1px;height:18px;background:#FFFFFF;"></div>
<div class="a" style="left:616px;top:93px;width:16px;height:1px;background:#404040;"></div>
<div class="a" style="left:631px;top:74px;width:1px;height:20px;background:#404040;"></div>
<div class="a" style="left:617px;top:92px;width:14px;height:1px;background:#808080;"></div>
<div class="a" style="left:630px;top:75px;width:1px;height:18px;background:#808080;"></div>
<svg class="a" style="left:616px;top:74px;" width="16" height="20" viewBox="0 0 16 20"><path d="M4 8h7l-3.5 4z" fill="#000"/></svg>
<div class="a" style="left:439px;top:84px;width:95px;height:1px;background:#6A1020;"></div>
<div class="t" style="left:541px;top:77px;font-size:11px;line-height:13px;color:#000;font-family:'Liberation Sans';">BYLAYER</div>
<div class="a" style="left:637px;top:74px;width:1px;height:19px;background:#808080;"></div>
<div class="a" style="left:638px;top:74px;width:1px;height:19px;background:#FFFFFF;"></div>
<div class="a" style="left:643px;top:72px;width:200px;height:24px;background:#FFFFFF;"></div>
<div class="a" style="left:643px;top:72px;width:199px;height:1px;background:#808080;"></div>
<div class="a" style="left:643px;top:72px;width:1px;height:23px;background:#808080;"></div>
<div class="a" style="left:644px;top:73px;width:197px;height:1px;background:#404040;"></div>
<div class="a" style="left:644px;top:73px;width:1px;height:21px;background:#404040;"></div>
<div class="a" style="left:643px;top:95px;width:200px;height:1px;background:#FFFFFF;"></div>
<div class="a" style="left:842px;top:72px;width:1px;height:24px;background:#FFFFFF;"></div>
<div class="a" style="left:644px;top:94px;width:198px;height:1px;background:#D4D0C8;"></div>
<div class="a" style="left:841px;top:73px;width:1px;height:22px;background:#D4D0C8;"></div>
<div class="a" style="left:825px;top:74px;width:16px;height:20px;background:#D4D0C8;"></div>
<div class="a" style="left:826px;top:75px;width:14px;height:1px;background:#FFFFFF;"></div>
<div class="a" style="left:826px;top:75px;width:1px;height:18px;background:#FFFFFF;"></div>
<div class="a" style="left:825px;top:93px;width:16px;height:1px;background:#404040;"></div>
<div class="a" style="left:840px;top:74px;width:1px;height:20px;background:#404040;"></div>
<div class="a" style="left:826px;top:92px;width:14px;height:1px;background:#808080;"></div>
<div class="a" style="left:839px;top:75px;width:1px;height:18px;background:#808080;"></div>
<svg class="a" style="left:825px;top:74px;" width="16" height="20" viewBox="0 0 16 20"><path d="M4 8h7l-3.5 4z" fill="#000"/></svg>
<div class="a" style="left:649px;top:83px;width:83px;height:1px;background:#000;"></div>
<div class="a" style="left:649px;top:84px;width:83px;height:1px;background:#000;"></div>
<div class="t" style="left:734px;top:77px;font-size:11px;line-height:13px;color:#000;font-family:'Liberation Sans';">BYLAYER</div>
<div class="a" style="left:847px;top:74px;width:1px;height:19px;background:#808080;"></div>
<div class="a" style="left:848px;top:74px;width:1px;height:19px;background:#FFFFFF;"></div>
<div class="a" style="left:852px;top:72px;width:100px;height:24px;background:#D4D0C8;"></div>
<div class="a" style="left:852px;top:72px;width:99px;height:1px;background:#808080;"></div>
<div class="a" style="left:852px;top:72px;width:1px;height:23px;background:#808080;"></div>
<div class="a" style="left:853px;top:73px;width:97px;height:1px;background:#404040;"></div>
<div class="a" style="left:853px;top:73px;width:1px;height:21px;background:#404040;"></div>
<div class="a" style="left:852px;top:95px;width:100px;height:1px;background:#FFFFFF;"></div>
<div class="a" style="left:951px;top:72px;width:1px;height:24px;background:#FFFFFF;"></div>
<div class="a" style="left:853px;top:94px;width:98px;height:1px;background:#D4D0C8;"></div>
<div class="a" style="left:950px;top:73px;width:1px;height:22px;background:#D4D0C8;"></div>
<div class="a" style="left:934px;top:74px;width:16px;height:20px;background:#D4D0C8;"></div>
<div class="a" style="left:935px;top:75px;width:14px;height:1px;background:#FFFFFF;"></div>
<div class="a" style="left:935px;top:75px;width:1px;height:18px;background:#FFFFFF;"></div>
<div class="a" style="left:934px;top:93px;width:16px;height:1px;background:#404040;"></div>
<div class="a" style="left:949px;top:74px;width:1px;height:20px;background:#404040;"></div>
<div class="a" style="left:935px;top:92px;width:14px;height:1px;background:#808080;"></div>
<div class="a" style="left:948px;top:75px;width:1px;height:18px;background:#808080;"></div>
<svg class="a" style="left:934px;top:74px;" width="16" height="20" viewBox="0 0 16 20"><path d="M5 9h7l-3.5 4z" fill="#fff"/><path d="M4 8h7l-3.5 4z" fill="#808080"/></svg>
<div class="t" style="left:858px;top:77px;font-size:11px;line-height:13px;color:#808080;font-family:'Liberation Sans';">BYCOLOR</div>
<div class="a" style="left:0px;top:98px;width:31px;height:391px;background:#D4D0C8;"></div>
<div class="a" style="left:0px;top:98px;width:31px;height:1px;background:#FFFFFF;"></div>
<div class="a" style="left:0px;top:98px;width:1px;height:391px;background:#FFFFFF;"></div>
<div class="a" style="left:0px;top:488px;width:31px;height:1px;background:#808080;"></div>
<div class="a" style="left:30px;top:98px;width:1px;height:391px;background:#808080;"></div>
<div class="a" style="left:2px;top:102px;width:27px;height:1px;background:#FFFFFF;"></div>
<div class="a" style="left:2px;top:103px;width:27px;height:1px;background:#D4D0C8;"></div>
<div class="a" style="left:2px;top:104px;width:27px;height:1px;background:#808080;"></div>
<div class="a" style="left:2px;top:106px;width:27px;height:1px;background:#FFFFFF;"></div>
<div class="a" style="left:2px;top:107px;width:27px;height:1px;background:#D4D0C8;"></div>
<div class="a" style="left:2px;top:108px;width:27px;height:1px;background:#808080;"></div>
<svg class="a" style="left:7px;top:111px;" width="17" height="17" viewBox="0 0 17 17"><path d="M2 2l10 10" stroke="#000" stroke-width="1.2"/><rect x="1" y="1" width="3" height="3" fill="#00B0A0" stroke="#005850" stroke-width="0.5"/><rect x="11" y="11" width="3" height="3" fill="#00B0A0" stroke="#005850" stroke-width="0.5"/></svg>
<svg class="a" style="left:7px;top:133px;" width="17" height="17" viewBox="0 0 17 17"><path d="M1 1l14 14" stroke="#000" stroke-width="1.2"/><path d="M0 0l5 1-4 4zM16 16l-5-1 4-4z" fill="#000"/><rect x="7" y="7" width="3" height="3" fill="#00B0A0" stroke="#005850" stroke-width="0.5"/></svg>
<svg class="a" style="left:7px;top:155px;" width="17" height="17" viewBox="0 0 17 17"><path d="M5 5a3.5 3.5 0 0 0 0 7" fill="none" stroke="#000" stroke-width="1.2"/><path d="M5 5h9" stroke="#000" stroke-width="1.2"/><rect x="4" y="4" width="3" height="3" fill="#00B0A0" stroke="#005850" stroke-width="0.5"/><rect x="13" y="4" width="3" height="3" fill="#00B0A0" stroke="#005850" stroke-width="0.5"/><rect x="4" y="11" width="3" height="3" fill="#00B0A0" stroke="#005850" stroke-width="0.5"/><path d="M16 16h-3l3-3z" fill="#000"/></svg>
<svg class="a" style="left:7px;top:177px;" width="17" height="17" viewBox="0 0 17 17"><path d="M8 2l6 4-2 7H4L2 6z" fill="#E8F0EC" stroke="#000" stroke-width="1.1"/><rect x="7" y="1" width="3" height="3" fill="#E070E0" stroke="#005850" stroke-width="0.5"/><rect x="13" y="5" width="3" height="3" fill="#00B0A0" stroke="#005850" stroke-width="0.5"/><path d="M16 16h-3l3-3z" fill="#000"/></svg>
<svg class="a" style="left:7px;top:199px;" width="17" height="17" viewBox="0 0 17 17"><rect x="2" y="4" width="12" height="7" fill="#E0E8E4" stroke="#000" stroke-width="1.1"/><rect x="1" y="3" width="3" height="3" fill="#00B0A0" stroke="#005850" stroke-width="0.5"/><rect x="13" y="10" width="3" height="3" fill="#00B0A0" stroke="#005850" stroke-width="0.5"/></svg>
<svg class="a" style="left:7px;top:221px;" width="17" height="17" viewBox="0 0 17 17"><path d="M2 3q9 1 11 10" fill="none" stroke="#000" stroke-width="1.2"/><rect x="1" y="2" width="3" height="3" fill="#00B0A0" stroke="#005850" stroke-width="0.5"/><rect x="8" y="5" width="3" height="3" fill="#00B0A0" stroke="#005850" stroke-width="0.5"/><rect x="12" y="12" width="3" height="3" fill="#000" stroke="#005850" stroke-width="0.5"/></svg>
<svg class="a" style="left:7px;top:243px;" width="17" height="17" viewBox="0 0 17 17"><defs><radialGradient id="cg" cx="30%" cy="30%" r="80%"><stop offset="0" stop-color="#fff"/><stop offset="1" stop-color="#90A8A0"/></radialGradient></defs><circle cx="8" cy="8" r="6.5" fill="url(#cg)" stroke="#000" stroke-width="1.2"/><path d="M8 8l4-4" stroke="#000"/><rect x="7" y="7" width="3" height="3" fill="#00B0A0" stroke="#005850" stroke-width="0.5"/></svg>
<svg class="a" style="left:7px;top:265px;" width="17" height="17" viewBox="0 0 17 17"><path d="M3 10a3 3 0 0 1 1-5a3 3 0 0 1 5-2a3 3 0 0 1 5 3a3 3 0 0 1-1 5a3 3 0 0 1-5 2a3 3 0 0 1-5-3z" fill="#F0F8F4" stroke="#1E5A3C" stroke-width="1.1"/></svg>
<svg class="a" style="left:7px;top:287px;" width="17" height="17" viewBox="0 0 17 17"><path d="M2 1q6 2 4 6t7 7" fill="none" stroke="#000" stroke-width="1.1"/><rect x="1" y="0" width="3" height="3" fill="#E070E0" stroke="#005850" stroke-width="0.5"/><rect x="5" y="6" width="3" height="3" fill="#00B0A0" stroke="#005850" stroke-width="0.5"/><rect x="12" y="13" width="3" height="3" fill="#00B0A0" stroke="#005850" stroke-width="0.5"/></svg>
<svg class="a" style="left:7px;top:309px;" width="17" height="17" viewBox="0 0 17 17"><ellipse cx="8" cy="8" rx="7" ry="4.5" transform="rotate(-35 8 8)" fill="url(#cg)" stroke="#000" stroke-width="1.1"/><path d="M3 11l10-7" stroke="#000"/><rect x="2" y="10" width="3" height="3" fill="#00B0A0" stroke="#005850" stroke-width="0.5"/><rect x="12" y="3" width="3" height="3" fill="#00B0A0" stroke="#005850" stroke-width="0.5"/><rect x="3" y="4" width="3" height="3" fill="#00B0A0" stroke="#005850" stroke-width="0.5"/><path d="M16 16h-3l3-3z" fill="#000"/></svg>
<svg class="a" style="left:7px;top:331px;" width="17" height="17" viewBox="0 0 17 17"><ellipse cx="8" cy="9" rx="7" ry="4.8" transform="rotate(-25 8 9)" fill="url(#cg)" stroke="#000" stroke-width="1.1"/><path d="M3 11l9-6" stroke="#000"/><rect x="3" y="5" width="3" height="3" fill="#00B0A0" stroke="#005850" stroke-width="0.5"/><rect x="11" y="3" width="3" height="3" fill="#00B0A0" stroke="#005850" stroke-width="0.5"/><path d="M16 16h-3l3-3z" fill="#000"/></svg>
<svg class="a" style="left:7px;top:353px;" width="17" height="17" viewBox="0 0 17 17"><rect x="2" y="1" width="10" height="10" fill="#D8E8E0" stroke="#5E8C74"/><rect x="7" y="5" width="8" height="6" fill="#F0B8D8" stroke="#000" stroke-width="0.8"/><circle cx="6" cy="11" r="3" fill="#F0B8D8" stroke="#000" stroke-width="0.8"/><rect x="13" y="9" width="3" height="3" fill="#00B0A0" stroke="#005850" stroke-width="0.5"/><path d="M16 16h-3l3-3z" fill="#000"/></svg>
<svg class="a" style="left:7px;top:375px;" width="17" height="17" viewBox="0 0 17 17"><rect x="6" y="2" width="8" height="6" fill="#F0C8E0" stroke="#000" stroke-width="0.8"/><circle cx="5" cy="10" r="3" fill="#F0C8E0" stroke="#000" stroke-width="0.8"/><rect x="13" y="6" width="3" height="3" fill="#00B0A0" stroke="#005850" stroke-width="0.5"/></svg>
<svg class="a" style="left:7px;top:397px;" width="17" height="17" viewBox="0 0 17 17"><rect x="7" y="7" width="3" height="3" fill="#00B0A0" stroke="#005850" stroke-width="0.5"/></svg>
<svg class="a" style="left:7px;top:419px;" width="17" height="17" viewBox="0 0 17 17"><path d="M1 3.5h14M1 12.5h14M3.5 1v14M12.5 1v14" stroke="#1E5A3C" stroke-width="1.4"/><path d="M4 12l8-8M4 8l4-4M8 12l4-4M6 12l6-6M4 10l6-6" stroke="#6A8A78" stroke-width="0.9"/></svg>
<svg class="a" style="left:7px;top:441px;" width="17" height="17" viewBox="0 0 17 17"><path d="M1 14V8l5-5h9v11z" fill="url(#rg)" stroke="#1E5A3C" stroke-width="1.1"/><circle cx="8" cy="8.5" r="2.5" fill="#fff" stroke="#1E5A3C" stroke-width="1.1"/><defs><linearGradient id="rg" x1="0" y1="0" x2="1" y2="1"><stop offset="0" stop-color="#fff"/><stop offset="1" stop-color="#70A088"/></linearGradient></defs></svg>
<svg class="a" style="left:7px;top:463px;" width="17" height="17" viewBox="0 0 17 17"><rect x="2" y="2" width="12" height="1.6" fill="#000"/><rect x="2" y="2" width="1.3" height="4" fill="#000"/><rect x="12.7" y="2" width="1.3" height="4" fill="#000"/><rect x="7" y="2" width="2.2" height="12" fill="#000"/><rect x="4.8" y="13" width="6.6" height="1.6" fill="#000"/></svg>
<div class="a" style="left:993px;top:98px;width:31px;height:391px;background:#D4D0C8;"></div>
<div class="a" style="left:993px;top:98px;width:31px;height:1px;background:#FFFFFF;"></div>
<div class="a" style="left:993px;top:97px;width:1px;height:392px;background:#FFFFFF;"></div>
<div class="a" style="left:993px;top:488px;width:31px;height:1px;background:#808080;"></div>
<div class="a" style="left:996px;top:102px;width:27px;height:1px;background:#FFFFFF;"></div>
<div class="a" style="left:996px;top:103px;width:27px;height:1px;background:#D4D0C8;"></div>
<div class="a" style="left:996px;top:104px;width:27px;height:1px;background:#808080;"></div>
<div class="a" style="left:996px;top:106px;width:27px;height:1px;background:#FFFFFF;"></div>
<div class="a" style="left:996px;top:107px;width:27px;height:1px;background:#D4D0C8;"></div>
<div class="a" style="left:996px;top:108px;width:27px;height:1px;background:#808080;"></div>
<div class="a" style="left:993px;top:489px;width:31px;height:60px;background:#D4D0C8;"></div>
<div class="a" style="left:993px;top:489px;width:31px;height:1px;background:#FFFFFF;"></div>
<div class="a" style="left:993px;top:489px;width:1px;height:60px;background:#FFFFFF;"></div>
<div class="a" style="left:993px;top:548px;width:31px;height:1px;background:#808080;"></div>
<div class="a" style="left:996px;top:493px;width:27px;height:1px;background:#FFFFFF;"></div>
<div class="a" style="left:996px;top:494px;width:27px;height:1px;background:#D4D0C8;"></div>
<div class="a" style="left:996px;top:495px;width:27px;height:1px;background:#808080;"></div>
<div class="a" style="left:996px;top:497px;width:27px;height:1px;background:#FFFFFF;"></div>
<div class="a" style="left:996px;top:498px;width:27px;height:1px;background:#D4D0C8;"></div>
<div class="a" style="left:996px;top:499px;width:27px;height:1px;background:#808080;"></div>
<svg class="a" style="left:1002px;top:111px;" width="17" height="17" viewBox="0 0 17 17"><path d="M0 1.5h5.5" stroke="#000" stroke-width="1.2"/><circle cx="13.5" cy="1.5" r="0.8" fill="#000"/><path d="M1 14.5L6.5 9" stroke="#E080D0" stroke-width="4"/><path d="M1 16L2 13" stroke="#fff" stroke-width="0.8"/><path d="M6.5 9L8 7.5" stroke="#F0F0F0" stroke-width="4"/><path d="M8 7.5L9.3 6.2" stroke="#30B0A0" stroke-width="4"/><path d="M9.3 6.2L11.8 3.7" stroke="#E85838" stroke-width="4"/><path d="M7.8 7.7L9.5 6" stroke="#000" stroke-width="0.8"/></svg>
<svg class="a" style="left:1002px;top:133px;" width="17" height="17" viewBox="0 0 17 17"><defs><linearGradient id="gw" x1="0" y1="0" x2="1" y2="1"><stop offset="0" stop-color="#fff"/><stop offset="1" stop-color="#8AA898"/></linearGradient></defs><circle cx="5" cy="11" r="3.6" fill="url(#gw)" stroke="#000" stroke-width="1.1"/><circle cx="12" cy="4" r="3.3" fill="url(#gw)" stroke="#000" stroke-width="1.1"/><circle cx="3.5" cy="8.5" r="3" fill="url(#gw)" stroke="#000" stroke-width="1"/><path d="M14.5 7q0 6-5 6" fill="none" stroke="#1E5A3C" stroke-width="1.6"/><path d="M9.5 10l-2.5 3 3 2z" fill="#1E5A3C"/></svg>
<svg class="a" style="left:1002px;top:155px;" width="17" height="17" viewBox="0 0 17 17"><path d="M0.5 2.5h6v11z" fill="url(#gw)" stroke="#000" stroke-width="1.1"/><path d="M15.5 2.5h-6v11z" fill="url(#gw)" stroke="#000" stroke-width="1.1"/><path d="M8 0.5v15" stroke="#1E6A4C" stroke-width="1.2"/></svg>
<svg class="a" style="left:1002px;top:177px;" width="17" height="17" viewBox="0 0 17 17"><path d="M2.5 15V5.5a3 3 0 0 1 6 0V8h3a2.5 2.5 0 0 1 0 5H9" fill="none" stroke="#000" stroke-width="1.1"/><path d="M4.5 15V6a1 1 0 0 1 2 0v4h5a.8 .8 0 0 1 0 1.5H7V15" fill="none" stroke="#1E6A4C" stroke-width="1.2"/></svg>
<svg class="a" style="left:1002px;top:199px;" width="17" height="17" viewBox="0 0 17 17"><path d="M5 3.5h6M5 11.5h6M3.5 5v5M11.5 5v5" stroke="#404040" stroke-width="0.8"/><rect x="0.5" y="0.5" width="6" height="6" fill="url(#gw)" stroke="#000"/><rect x="9.5" y="0.5" width="6" height="6" fill="url(#gw)" stroke="#000"/><rect x="0.5" y="9.5" width="6" height="6" fill="url(#gw)" stroke="#000"/><rect x="9.5" y="9.5" width="6" height="6" fill="url(#gw)" stroke="#000"/></svg>
<svg class="a" style="left:1002px;top:221px;" width="17" height="17" viewBox="0 0 17 17"><path d="M8 1v14M1 8h14" stroke="#1E5A3C" stroke-width="2"/><path d="M8 0l3 3H5zM8 16l3-3H5zM0 8l3-3v6zM16 8l-3-3v6z" fill="#1E5A3C"/><circle cx="8" cy="8" r="2" fill="#000"/></svg>
<svg class="a" style="left:1002px;top:243px;" width="17" height="17" viewBox="0 0 17 17"><path d="M13 5a6 6 0 1 0 1 5" fill="none" stroke="#5E8C74" stroke-width="2"/><path d="M15 1v6h-6z" fill="#5E8C74"/><circle cx="8" cy="9" r="1" fill="#1E5A3C"/></svg>
<svg class="a" style="left:1002px;top:265px;" width="17" height="17" viewBox="0 0 17 17"><rect x="1.5" y="1.5" width="13" height="13" fill="url(#sg)" stroke="#1E5A3C"/><path d="M7 15V7h8" fill="none" stroke="#000" stroke-dasharray="1 1"/><defs><linearGradient id="sg" x1="0" y1="0" x2="1" y2="1"><stop offset="0" stop-color="#fff"/><stop offset="1" stop-color="#80A898"/></linearGradient></defs></svg>
<svg class="a" style="left:1002px;top:287px;" width="17" height="17" viewBox="0 0 17 17"><path d="M1 9l14-7v12H1z" fill="#DDE8E2" stroke="#000"/><path d="M1 11h14" stroke="#000" stroke-dasharray="1 1"/><path d="M2 13h12" stroke="#1E5A3C" stroke-width="2"/></svg>
<svg class="a" style="left:1002px;top:309px;" width="17" height="17" viewBox="0 0 17 17"><path d="M3 9l11-5" stroke="#1E5A3C" stroke-width="1.4"/><path d="M8 6v9" stroke="#1E5A3C" stroke-width="1.2" stroke-dasharray="2 1"/></svg>
<svg class="a" style="left:1002px;top:331px;" width="17" height="17" viewBox="0 0 17 17"><path d="M2 8l12-6M3 6l2 9M8 5v10" stroke="#1E5A3C" stroke-width="1.2"/><path d="M8 5l-2 3h4z" fill="#000"/></svg>
<svg class="a" style="left:1002px;top:353px;" width="17" height="17" viewBox="0 0 17 17"><rect x="3.5" y="1.5" width="10" height="13" fill="url(#sg)" stroke="#000"/><rect x="12" y="8" width="3" height="2" fill="#00B0A0"/></svg>
<svg class="a" style="left:1002px;top:375px;" width="17" height="17" viewBox="0 0 17 17"><rect x="3.5" y="1.5" width="10" height="13" fill="url(#sg)" stroke="#000"/><rect x="12" y="2" width="3" height="3" fill="#00B0A0"/><rect x="12" y="11" width="3" height="3" fill="#00B0A0"/></svg>
<svg class="a" style="left:1002px;top:397px;" width="17" height="17" viewBox="0 0 17 17"><path d="M1 1l14 14" stroke="#00B0A0" stroke-width="2.5"/><path d="M1 1l14 14" stroke="#1E5A3C" stroke-width="0.8"/><path d="M14 2L2 14" stroke="#fff" stroke-width="1"/></svg>
<svg class="a" style="left:1002px;top:419px;" width="17" height="17" viewBox="0 0 17 17"><path d="M2 12l8-9h5" fill="none" stroke="#1E5A3C" stroke-width="1.4"/><path d="M14 3v13" stroke="#000" stroke-dasharray="1 1"/></svg>
<svg class="a" style="left:1002px;top:441px;" width="17" height="17" viewBox="0 0 17 17"><path d="M1 3h6q7 0 7 12" fill="none" stroke="#1E5A3C" stroke-width="1.5"/><path d="M8 3q5 2 6 8" fill="none" stroke="#00B0A0" stroke-width="1.5"/><path d="M14 2v13" stroke="#000" stroke-dasharray="1 1"/></svg>
<svg class="a" style="left:1002px;top:463px;" width="17" height="17" viewBox="0 0 17 17"><path d="M1 1l2 2M4 0v2M0 5h2" stroke="#000" stroke-dasharray="1 1"/><path d="M4 4l6 6" stroke="#000" stroke-width="1.5"/><path d="M6 8l4-2 5 4-3 5-5-2z" fill="#E02000"/><path d="M8 9l4 1-2 3" fill="#FFD000"/></svg>
<svg class="a" style="left:1000px;top:501px;" width="18" height="17" viewBox="0 0 18 17"><rect x="1.5" y="9.5" width="8" height="6" fill="#E8F0EC" stroke="#2A6A4C"/><rect x="6.5" y="0.5" width="9" height="6" fill="#E8F0EC" stroke="#2A6A4C"/><rect x="3.5" y="3.5" width="9" height="10" fill="#5A8A72" stroke="#1E5A3C"/></svg>
<svg class="a" style="left:1000px;top:523px;" width="18" height="17" viewBox="0 0 18 17"><rect x="3.5" y="2.5" width="10" height="10" fill="#5A8A72" stroke="#1E5A3C"/><rect x="7.5" y="0.5" width="8" height="6" fill="#E8F0EC" stroke="#2A6A4C"/><rect x="0.5" y="8.5" width="9" height="7" fill="#E8F0EC" stroke="#2A6A4C"/></svg>
<div class="a" style="left:30px;top:98px;width:1px;height:521px;background:#808080;"></div>
<div class="a" style="left:31px;top:99px;width:962px;height:519px;background:#D4D0C8;"></div>
<div class="a" style="left:31px;top:119px;width:1px;height:500px;background:#FFFFFF;"></div>
<div class="a" style="left:31px;top:119px;width:957px;height:1px;background:#FFFFFF;"></div>
<div class="a" style="left:991px;top:119px;width:1px;height:500px;background:#808080;"></div>
<div class="a" style="left:992px;top:119px;width:1px;height:500px;background:#404040;"></div>
<div class="a" style="left:993px;top:549px;width:1px;height:70px;background:#FFFFFF;"></div>
<div class="a" style="left:31px;top:618px;width:963px;height:1px;background:#404040;"></div>
<div class="a" style="left:0px;top:619px;width:1024px;height:1px;background:#FFFFFF;"></div>
<div class="a" style="left:33px;top:101px;width:262px;height:19px;background:#D4D0C8;"></div>
<div class="a" style="left:34px;top:101px;width:260px;height:1px;background:#FFFFFF;"></div>
<div class="a" style="left:33px;top:102px;width:1px;height:18px;background:#FFFFFF;"></div>
<div class="a" style="left:34px;top:102px;width:1px;height:1px;background:#FFFFFF;"></div>
<svg class="a" style="left:39px;top:102px;" width="16" height="16" viewBox="0 0 16 16"><path d="M0.5 15.5V5.5l5-5h9.5v15z" fill="#fff" stroke="#000"/><path d="M5 1v4.5h-4.5" fill="#D8D8D8" stroke="#000"/><rect x="9" y="2" width="3.5" height="13" fill="#FFFF00"/><path d="M10.5 1v14.5M1 10.5h14" stroke="#000"/><path d="M15 0.5v15" stroke="#000" stroke-width="1.6"/><path d="M5.5 0.5h9.5" stroke="#000"/></svg>
<div class="t" style="left:70px;top:104px;font-size:11px;line-height:13px;color:#000;font-family:'Liberation Sans';">www_solidcad</div>
<div class="t" style="left:261px;top:104px;font-size:11px;line-height:13px;color:#000;font-family:'Liberation Sans';">.dwg</div>
<div class="a" style="left:295px;top:99px;width:116px;height:21px;background:#D4D0C8;"></div>
<div class="a" style="left:296px;top:99px;width:113px;height:1px;background:#FFFFFF;"></div>
<div class="a" style="left:295px;top:100px;width:1px;height:20px;background:#FFFFFF;"></div>
<div class="a" style="left:409px;top:100px;width:1px;height:20px;background:#808080;"></div>
<div class="a" style="left:410px;top:101px;width:1px;height:19px;background:#404040;"></div>
<svg class="a" style="left:298px;top:100px;" width="16" height="16" viewBox="0 0 16 16"><path d="M0.5 15.5V5.5l5-5h9.5v15z" fill="#fff" stroke="#000"/><path d="M5 1v4.5h-4.5" fill="#D8D8D8" stroke="#000"/><rect x="9" y="2" width="3.5" height="13" fill="#FFFF00"/><path d="M10.5 1v14.5M1 10.5h14" stroke="#000"/><path d="M15 0.5v15" stroke="#000" stroke-width="1.6"/><path d="M5.5 0.5h9.5" stroke="#000"/></svg>
<div class="t" style="left:323px;top:103px;font-size:11px;line-height:13px;color:#000;font-family:'Liberation Sans';font-weight:bold;letter-spacing:0.45px;">Výkres11.dwg</div>
<div class="a" style="left:31px;top:119px;width:264px;height:1px;background:#FFFFFF;"></div>
<div class="a" style="left:411px;top:119px;width:581px;height:1px;background:#FFFFFF;"></div>
<div class="a" style="left:987px;top:121px;width:1px;height:494px;background:#FFFFFF;"></div>
<div class="a" style="left:32px;top:120px;width:955px;height:1px;background:#D4D0C8;"></div>
<div class="a" style="left:35px;top:121px;width:1px;height:476px;background:#404040;"></div>
<div class="a" style="left:35px;top:121px;width:953px;height:1px;background:#404040;"></div>
<svg class="a" style="left:36px;top:122px;" width="951" height="475" viewBox="36 122 951 475" shape-rendering="crispEdges"><rect x="36" y="122" width="951" height="475" fill="#000"/><circle cx="212.5" cy="200.25" r="45" fill="none" stroke="#FFFF00" stroke-width="1.1"/><circle cx="212.5" cy="415.0" r="45" fill="none" stroke="#FFFF00" stroke-width="1.1"/><circle cx="709.5" cy="200.25" r="45" fill="none" stroke="#FFFF00" stroke-width="1.1"/><circle cx="709.5" cy="415.0" r="45" fill="none" stroke="#FFFF00" stroke-width="1.1"/><rect x="359.5" y="223.5" width="203" height="169" rx="17.5" fill="none" stroke="#FFFF00" stroke-width="1.1"/><path d="M607.50 200.25 L607.75 193.13 L608.49 186.05 L609.73 179.04 L611.45 172.13 L613.65 165.36 L616.32 158.76 L619.44 152.36 L623.00 146.20 L626.98 140.30 L631.36 134.69 L636.13 129.39 L641.25 124.45 L646.70 119.87 L652.46 115.69 L658.50 111.92 L664.79 108.57 L671.29 105.68 L677.98 103.24 L684.82 101.28 L691.79 99.80 L698.84 98.81 L705.94 98.31 L713.06 98.31 L720.16 98.81 L727.21 99.80 L734.18 101.28 L741.02 103.24 L747.71 105.68 L754.21 108.57 L760.50 111.92 L766.54 115.69 L772.30 119.87 L777.75 124.45 L782.87 129.39 L787.64 134.69 L792.02 140.30 L796.00 146.20 L799.56 152.36 L802.68 158.76 L805.35 165.36 L807.55 172.13 L809.27 179.04 L810.51 186.05 L811.25 193.13 L811.50 200.25 L811.25 207.37 L810.51 214.45 L809.27 221.46 L807.55 228.37 L805.35 235.14 L802.68 241.74 L799.56 248.14 L796.00 254.30 L792.02 260.20 L787.64 265.81 L782.87 271.11 L777.75 276.05 L772.30 280.63 L766.54 284.81 M766.54 284.81 Q742.5 302.75 709.5 302.25 M709.5 302.25 L709.5 313.0 M709.5 313.0 Q742.5 312.5 766.54 330.44 M766.54 330.44 L772.30 334.62 L777.75 339.20 L782.87 344.14 L787.64 349.44 L792.02 355.05 L796.00 360.95 L799.56 367.11 L802.68 373.51 L805.35 380.11 L807.55 386.88 L809.27 393.79 L810.51 400.80 L811.25 407.88 L811.50 415.00 L811.25 422.12 L810.51 429.20 L809.27 436.21 L807.55 443.12 L805.35 449.89 L802.68 456.49 L799.56 462.89 L796.00 469.05 L792.02 474.95 L787.64 480.56 L782.87 485.86 L777.75 490.80 L772.30 495.38 L766.54 499.56 L760.50 503.33 L754.21 506.68 L747.71 509.57 L741.02 512.01 L734.18 513.97 L727.21 515.45 L720.16 516.44 L713.06 516.94 L705.94 516.94 L698.84 516.44 L691.79 515.45 L684.82 513.97 L677.98 512.01 L671.29 509.57 L664.79 506.68 L658.50 503.33 L652.46 499.56 L646.70 495.38 L641.25 490.80 L636.13 485.86 L631.36 480.56 L626.98 474.95 L623.00 469.05 L619.44 462.89 L616.32 456.49 L613.65 449.89 L611.45 443.12 L609.73 436.21 L608.49 429.20 L607.75 422.12 L607.50 415.00 M314.00 200.25 L313.75 193.17 L313.01 186.12 L311.78 179.15 L310.07 172.27 L307.88 165.53 L305.22 158.97 L302.12 152.60 L298.58 146.46 L294.62 140.59 L290.25 135.01 L285.51 129.74 L280.42 124.82 L274.99 120.27 L269.26 116.10 L263.25 112.35 L256.99 109.02 L250.52 106.14 L243.87 103.72 L237.06 101.76 L230.13 100.29 L223.11 99.31 L216.04 98.81 L208.96 98.81 L201.89 99.31 L194.87 100.29 L187.94 101.76 L181.13 103.72 L174.48 106.14 L168.01 109.02 L161.75 112.35 L155.74 116.10 L150.01 120.27 L144.58 124.82 L139.49 129.74 L134.75 135.01 L130.38 140.59 L126.42 146.46 L122.88 152.60 L119.78 158.97 L117.12 165.53 L114.93 172.27 L113.22 179.15 L111.99 186.12 L111.25 193.17 L111.00 200.25 L111.25 207.33 L111.99 214.38 L113.22 221.35 L114.93 228.23 L117.12 234.97 L119.78 241.53 L122.88 247.90 L126.42 254.04 L130.38 259.91 L134.75 265.49 L139.49 270.76 L144.58 275.68 L150.01 280.23 L155.74 284.40 M155.74 284.40 Q179.5 302.75 212.5 302.25 M212.5 302.25 L212.5 313.0 M212.5 313.0 Q179.5 312.5 155.74 330.85 M155.74 330.85 L150.01 335.02 L144.58 339.57 L139.49 344.49 L134.75 349.76 L130.38 355.34 L126.42 361.21 L122.88 367.35 L119.78 373.72 L117.12 380.28 L114.93 387.02 L113.22 393.90 L111.99 400.87 L111.25 407.92 L111.00 415.00 L111.25 422.08 L111.99 429.13 L113.22 436.10 L114.93 442.98 L117.12 449.72 L119.78 456.28 L122.88 462.65 L126.42 468.79 L130.38 474.66 L134.75 480.24 L139.49 485.51 L144.58 490.43 L150.01 494.98 L155.74 499.15 L161.75 502.90 L168.01 506.23 L174.48 509.11 L181.13 511.53 L187.94 513.49 L194.87 514.96 L201.89 515.94 L208.96 516.44 L216.04 516.44 L223.11 515.94 L230.13 514.96 L237.06 513.49 L243.87 511.53 L250.52 509.11 L256.99 506.23 L263.25 502.90 L269.26 499.15 L274.99 494.98 L280.42 490.43 L285.51 485.51 L290.25 480.24 L294.62 474.66 L298.58 468.79 L302.12 462.65 L305.22 456.28 L307.88 449.72 L310.07 442.98 L311.78 436.10 L313.01 429.13 L313.75 422.08 L314.00 415.00 M314.50 200.25 L319.08 198.14 L323.69 196.09 L328.33 194.11 L333.00 192.20 L337.69 190.36 L342.42 188.59 L347.16 186.88 L351.94 185.25 L356.73 183.68 L361.55 182.19 L366.39 180.77 L371.25 179.41 L376.13 178.13 L381.03 176.93 L385.94 175.79 L390.87 174.72 L395.82 173.73 L400.78 172.81 L405.75 171.97 L410.74 171.19 L415.73 170.49 L420.74 169.86 L425.75 169.31 L430.77 168.83 L435.80 168.42 L440.83 168.09 L445.87 167.83 L450.91 167.65 L455.96 167.54 L461.00 167.50 L466.04 167.54 L471.09 167.65 L476.13 167.83 L481.17 168.09 L486.20 168.42 L491.23 168.83 L496.25 169.31 L501.26 169.86 L506.27 170.49 L511.26 171.19 L516.25 171.97 L521.22 172.81 L526.18 173.73 L531.13 174.72 L536.06 175.79 L540.97 176.93 L545.87 178.13 L550.75 179.41 L555.61 180.77 L560.45 182.19 L565.27 183.68 L570.06 185.25 L574.84 186.88 L579.58 188.59 L584.31 190.36 L589.00 192.20 L593.67 194.11 L598.31 196.09 L602.92 198.14 L607.50 200.25 M314.50 414.99 L319.07 417.15 L323.66 419.25 L328.29 421.27 L332.95 423.22 L337.64 425.11 L342.35 426.92 L347.09 428.67 L351.86 430.34 L356.65 431.94 L361.47 433.47 L366.31 434.92 L371.17 436.31 L376.04 437.62 L380.94 438.85 L385.86 440.02 L390.79 441.11 L395.74 442.12 L400.70 443.06 L405.68 443.93 L410.67 444.72 L415.67 445.44 L420.68 446.08 L425.70 446.65 L430.73 447.14 L435.76 447.55 L440.80 447.89 L445.85 448.16 L450.90 448.35 L455.95 448.46 L461.00 448.50 L466.05 448.46 L471.10 448.35 L476.15 448.16 L481.20 447.89 L486.24 447.55 L491.27 447.14 L496.30 446.65 L501.32 446.08 L506.33 445.44 L511.33 444.72 L516.32 443.93 L521.30 443.06 L526.26 442.12 L531.21 441.11 L536.14 440.02 L541.06 438.85 L545.96 437.62 L550.83 436.31 L555.69 434.92 L560.53 433.47 L565.35 431.94 L570.14 430.34 L574.91 428.67 L579.65 426.92 L584.36 425.11 L589.05 423.22 L593.71 421.27 L598.34 419.25 L602.93 417.15 L607.50 414.99" fill="none" stroke="#FFFF00" stroke-width="1.1"/><path d="M461 167.5 H987 M461 448.5 H987 M607 200.5 H940.5 M607 415.5 H940.5 M926.5 200.5 V415.5 M709.5 172 V228 M212.5 172 V228 M709.5 386 V597 M212.5 386 V597 M359.5 432 V597 M562.5 432 V597 M548.5 121 L461.5 504.5 M433 504.5 H490 M461.5 477 V533 M563.5 123 V151 M367.8 228.4 L463 337 M709.5 200.25 L857 123.5 M212.5 200.25 L62 121" fill="none" stroke="#00FF00" stroke-width="1.1"/><path d="M539 125.5 H588" stroke="#FF0000" stroke-width="1.1"/><path d="M926.50 200.50 L921.00 229.00 L932.00 229.00z" fill="#00FF00"/><path d="M926.50 415.50 L932.00 387.00 L921.00 387.00z" fill="#00FF00"/><path d="M536.20 177.60 L547.38 150.91 L537.63 148.70z" fill="#00FF00"/><path d="M798.90 153.10 L826.47 144.33 L821.84 135.47z" fill="#00FF00"/><path d="M367.80 228.40 L382.89 253.09 L390.39 246.48z" fill="#00FF00"/><path transform="translate(919.6 326.9) rotate(-90)" d="M0.30 -23.00 L5.00 -28.00 L5.00 0.00M0.00 0.00 L10.40 0.00M38.60 -14.60 L23.90 -14.60 L19.90 -18.80 L19.90 -24.00 L23.90 -28.10 L34.40 -28.10 L38.60 -24.00 L38.60 -8.35 L29.20 0.00 L22.90 0.00" fill="none" stroke="#00FF00" stroke-width="1.1"/><path transform="translate(431 292) rotate(47.6)" d="M0.00 0.00 L0.00 -29.00M0.00 -29.00 L14.00 -29.50 L16.60 -27.10 L18.35 -21.20 L13.90 -14.70 L4.30 -15.00 L0.25 -15.20M4.30 -15.00 L18.90 -1.00M28.20 -24.20 L32.80 -29.20 L42.40 -29.70 L45.85 -25.80 L47.20 -20.30 L42.60 -14.60 L33.40 -15.20 L27.70 -10.60 L28.20 -0.30 L47.70 -0.80" fill="none" stroke="#00FF00" stroke-width="1.1"/><path transform="translate(441 612) rotate(0)" d="M1.20 -22.40 L6.50 -27.70 L6.50 0.00M1.50 0.00 L11.50 0.00M35.00 -13.50 L37.50 -15.80 L39.60 -18.00 L39.60 -23.00 L34.60 -27.70 L24.00 -27.70 L20.25 -23.00 L20.25 -18.00 L22.75 -15.80 L25.00 -13.50 L35.00 -13.50 L39.60 -9.00 L39.60 -4.00 L35.00 0.00 L25.00 0.00 L20.25 -4.00 L20.25 -9.00 L25.00 -13.50" fill="none" stroke="#00FF00" stroke-width="1.1"/><path d="M80.5 569.5 V527.5 H77.5 L88.5 516 L100.5 527.5 H97.5 V553.5 H124.5 V550.5 L136 562 L124.5 573.5 V569.5 Z M80.5 553.5 H97.5 V569.5" fill="none" stroke="#FFFFFF" stroke-width="1.1"/><path d="M84 523 L88.5 527.5 L93.5 523 M88.5 527.5 V533 M84.5 542 L85.5 549.5 L88.7 544.5 L92 549.5 L93.5 542 M118.3 556.3 L127.6 565.6 M127.6 556.3 L118.3 565.6" fill="none" stroke="#FFFFFF" stroke-width="1"/></svg>
<div class="a" style="left:36px;top:597px;width:951px;height:16px;background:#D4D0C8;"></div>
<div class="a" style="left:97px;top:612px;width:168px;height:1px;background:#808080;"></div>
<div class="a" style="left:35px;top:597px;width:16px;height:16px;background:#D4D0C8;"></div>
<div class="a" style="left:35px;top:597px;width:14px;height:1px;background:#FFFFFF;"></div>
<div class="a" style="left:35px;top:597px;width:1px;height:14px;background:#FFFFFF;"></div>
<div class="a" style="left:49px;top:597px;width:2px;height:16px;background:#808080;"></div>
<div class="a" style="left:35px;top:611px;width:16px;height:2px;background:#808080;"></div>
<svg class="a" style="left:35px;top:597px;" width="16" height="16" viewBox="0 0 16 16"><path d="M4 3h1.2v9H4zM11 3v9L6 7.5z" fill="#000"/></svg>
<div class="a" style="left:51px;top:597px;width:16px;height:16px;background:#D4D0C8;"></div>
<div class="a" style="left:51px;top:597px;width:14px;height:1px;background:#FFFFFF;"></div>
<div class="a" style="left:51px;top:597px;width:1px;height:14px;background:#FFFFFF;"></div>
<div class="a" style="left:65px;top:597px;width:2px;height:16px;background:#808080;"></div>
<div class="a" style="left:51px;top:611px;width:16px;height:2px;background:#808080;"></div>
<svg class="a" style="left:51px;top:597px;" width="16" height="16" viewBox="0 0 16 16"><path d="M10.5 3v9L5.5 7.5z" fill="#000"/></svg>
<div class="a" style="left:67px;top:597px;width:16px;height:16px;background:#D4D0C8;"></div>
<div class="a" style="left:67px;top:597px;width:14px;height:1px;background:#FFFFFF;"></div>
<div class="a" style="left:67px;top:597px;width:1px;height:14px;background:#FFFFFF;"></div>
<div class="a" style="left:81px;top:597px;width:2px;height:16px;background:#808080;"></div>
<div class="a" style="left:67px;top:611px;width:16px;height:2px;background:#808080;"></div>
<svg class="a" style="left:67px;top:597px;" width="16" height="16" viewBox="0 0 16 16"><path d="M5.5 3v9l5-4.5z" fill="#000"/></svg>
<div class="a" style="left:83px;top:597px;width:16px;height:16px;background:#D4D0C8;"></div>
<div class="a" style="left:83px;top:597px;width:14px;height:1px;background:#FFFFFF;"></div>
<div class="a" style="left:83px;top:597px;width:1px;height:14px;background:#FFFFFF;"></div>
<div class="a" style="left:97px;top:597px;width:2px;height:16px;background:#808080;"></div>
<div class="a" style="left:83px;top:611px;width:16px;height:2px;background:#808080;"></div>
<svg class="a" style="left:83px;top:597px;" width="16" height="16" viewBox="0 0 16 16"><path d="M4.5 3v9l5-4.5zM10 3h1.2v9H10z" fill="#000"/></svg>
<div class="a" style="left:35px;top:611px;width:1px;height:3px;background:#808080;"></div>
<div class="a" style="left:153px;top:597px;width:834px;height:1px;background:#000;"></div>
<div class="a" style="left:156px;top:598px;width:831px;height:1px;background:#E8E5E0;"></div>
<svg class="a" style="left:97px;top:597px;" width="190" height="16" viewBox="0 0 190 16"><path d="M2.5 0L10 15.5H49.8L57.5 0z" fill="#fff"/>
<path d="M2.5 0L10 15.5M57.5 0L49.8 15.5M54.6 5.2L59 15.5M112.4 5.2L108 15.5M110 0L117 15.5M174 0L167 15.5" stroke="#000" fill="none"/></svg>
<div class="t" style="left:110px;top:599px;font-size:11px;line-height:13px;color:#000;font-family:'Liberation Sans';font-weight:bold;letter-spacing:0.4px;">Model</div>
<div class="t" style="left:161px;top:599px;font-size:11px;line-height:13px;color:#000;font-family:'Liberation Sans';">Layout1</div>
<div class="t" style="left:220px;top:599px;font-size:11px;line-height:13px;color:#000;font-family:'Liberation Sans';">Layout2</div>
<div class="a" style="left:36px;top:614px;width:952px;height:1px;background:#FFFFFF;"></div>
<div class="a" style="left:0px;top:647px;width:1024px;height:1px;background:#808080;"></div>
<div class="a" style="left:0px;top:648px;width:1024px;height:1px;background:#FFFFFF;"></div>
<div class="a" style="left:0px;top:677px;width:1024px;height:1px;background:#808080;"></div>
<div class="a" style="left:0px;top:619px;width:473px;height:29px;background:#D4D0C8;"></div>
<div class="a" style="left:0px;top:619px;width:473px;height:1px;background:#FFFFFF;"></div>
<div class="a" style="left:0px;top:619px;width:1px;height:29px;background:#FFFFFF;"></div>
<div class="a" style="left:0px;top:647px;width:473px;height:1px;background:#808080;"></div>
<div class="a" style="left:472px;top:619px;width:1px;height:29px;background:#808080;"></div>
<div class="a" style="left:4px;top:621px;width:1px;height:25px;background:#FFFFFF;"></div>
<div class="a" style="left:5px;top:621px;width:1px;height:25px;background:#D4D0C8;"></div>
<div class="a" style="left:6px;top:621px;width:1px;height:25px;background:#808080;"></div>
<div class="a" style="left:4px;top:621px;width:3px;height:1px;background:#FFFFFF;"></div>
<div class="a" style="left:4px;top:645px;width:3px;height:1px;background:#808080;"></div>
<div class="a" style="left:8px;top:621px;width:1px;height:25px;background:#FFFFFF;"></div>
<div class="a" style="left:9px;top:621px;width:1px;height:25px;background:#D4D0C8;"></div>
<div class="a" style="left:10px;top:621px;width:1px;height:25px;background:#808080;"></div>
<div class="a" style="left:8px;top:621px;width:3px;height:1px;background:#FFFFFF;"></div>
<div class="a" style="left:8px;top:645px;width:3px;height:1px;background:#808080;"></div>
<svg class="a" style="left:14px;top:625px;" width="17" height="17" viewBox="0 0 17 17"><path d="M0.5 8.5L5.5 8.5L15.5 13.5L10.5 13.5z" fill="#FFFF00" stroke="#000" stroke-width="1"/><path d="M0.5 5.5L5.5 5.5L15.5 10.5L10.5 10.5z" fill="#fff" stroke="#000" stroke-width="1"/><path d="M0.5 2.5L5.5 2.5L15.5 7.5L10.5 7.5z" fill="#fff" stroke="#000" stroke-width="1"/><circle cx="13" cy="3" r="2.5" fill="#fff" stroke="#000"/><path d="M11 5L7 9M7 6v3h3" stroke="#000" stroke-width="1.2" fill="none"/></svg>
<div class="a" style="left:38px;top:622px;width:1px;height:22px;background:#808080;"></div>
<div class="a" style="left:39px;top:622px;width:1px;height:22px;background:#FFFFFF;"></div>
<svg class="a" style="left:46px;top:625px;" width="17" height="17" viewBox="0 0 17 17"><path d="M0.5 9.5L5.5 5.5H15.5L10.5 9.5z" fill="#D0D0D0" stroke="#808080"/><path d="M0.5 12.5L5.5 8.5H15.5L10.5 12.5z" fill="#FFFF00" stroke="#000"/><path d="M0.5 14.5L5.5 10.5H15.5L10.5 14.5z" fill="none" stroke="#909090"/><path d="M8 11L12 5" stroke="#000" stroke-width="2.2"/><circle cx="13" cy="3" r="2.7" fill="#000"/></svg>
<svg class="a" style="left:69px;top:625px;" width="17" height="17" viewBox="0 0 17 17"><path d="M0.5 8.5L5.5 8.5L15.5 13.5L10.5 13.5z" fill="#fff" stroke="#000" stroke-width="1"/><path d="M0.5 5.5L5.5 5.5L15.5 10.5L10.5 10.5z" fill="#fff" stroke="#000" stroke-width="1"/><path d="M0.5 2.5L5.5 2.5L15.5 7.5L10.5 7.5z" fill="#fff" stroke="#000" stroke-width="1"/><circle cx="13" cy="3" r="2.5" fill="#fff" stroke="#000"/><path d="M11 5L7 9M7 6v3h3" stroke="#000" stroke-width="1.2" fill="none"/><circle cx="2.5" cy="13.5" r="2.3" fill="#FFFF00" stroke="#000"/></svg>
<svg class="a" style="left:92px;top:625px;" width="17" height="17" viewBox="0 0 17 17"><path d="M0.5 8.5L5.5 8.5L15.5 13.5L10.5 13.5z" fill="#fff" stroke="#000" stroke-width="1"/><path d="M0.5 5.5L5.5 5.5L15.5 10.5L10.5 10.5z" fill="#fff" stroke="#000" stroke-width="1"/><path d="M0.5 2.5L5.5 2.5L15.5 7.5L10.5 7.5z" fill="#fff" stroke="#000" stroke-width="1"/><path d="M5 4a3.2 3 0 1 1 5 2.3c-1.2 .8-1.5 1.5-1.5 3" fill="none" stroke="#A01010" stroke-width="2.2"/><rect x="7.5" y="11" width="2" height="2" fill="#A01010"/></svg>
<div class="a" style="left:116px;top:622px;width:1px;height:22px;background:#808080;"></div>
<div class="a" style="left:117px;top:622px;width:1px;height:22px;background:#FFFFFF;"></div>
<svg class="a" style="left:124px;top:625px;" width="17" height="17" viewBox="0 0 17 17"><path d="M0.5 6.5L5.5 3.5H15.5L10.5 6.5z" fill="none" stroke="#909090"/><path d="M0.5 9.5L5.5 6.5H15.5L10.5 9.5z" fill="#FFFF00" stroke="#000"/><path d="M0.5 12.5L5.5 9.5H15.5L10.5 12.5z" fill="none" stroke="#808080"/></svg>
<svg class="a" style="left:147px;top:625px;" width="17" height="17" viewBox="0 0 17 17"><path d="M14.0 7.5L2.0 7.5" stroke="#1838A8" stroke-width="1.3"/><path d="M12.2 11.7L3.8 3.3" stroke="#1838A8" stroke-width="1.3"/><path d="M8.0 13.5L8.0 1.5" stroke="#1838A8" stroke-width="1.3"/><path d="M3.8 11.7L12.2 3.3" stroke="#1838A8" stroke-width="1.3"/><circle cx="8" cy="7.5" r="2.7" fill="none" stroke="#1838A8" stroke-width="1.3"/><circle cx="8" cy="7.5" r="1" fill="#fff"/></svg>
<svg class="a" style="left:170px;top:625px;" width="17" height="17" viewBox="0 0 17 17"><path d="M13.0 5.5L3.0 5.5" stroke="#D02020" stroke-width="1.1"/><path d="M11.5 9.0L4.5 2.0" stroke="#D02020" stroke-width="1.1"/><path d="M8.0 10.5L8.0 0.5" stroke="#D02020" stroke-width="1.1"/><path d="M4.5 9.0L11.5 2.0" stroke="#D02020" stroke-width="1.1"/><circle cx="8" cy="5.5" r="2.2" fill="none" stroke="#D02020" stroke-width="1.1"/><text x="0.5" y="16" font-size="6.2" font-weight="bold" font-family="Liberation Sans" fill="#202020">MULT</text></svg>
<div class="a" style="left:194px;top:622px;width:1px;height:22px;background:#808080;"></div>
<div class="a" style="left:195px;top:622px;width:1px;height:22px;background:#FFFFFF;"></div>
<svg class="a" style="left:201px;top:625px;" width="17" height="17" viewBox="0 0 17 17"><path d="M5 7V4.5a3 3 0 0 1 6 0V7" fill="none" stroke="#102080" stroke-width="1.8"/><rect x="3" y="7" width="10" height="9" fill="#102080"/><path d="M3 8.5h10M3 11h10M3 13.5h10" stroke="#10B0C0" stroke-width="1.2"/></svg>
<svg class="a" style="left:224px;top:625px;" width="17" height="17" viewBox="0 0 17 17"><path d="M10 7V4a2.7 2.7 0 0 1 5.4 0v2" fill="none" stroke="#000" stroke-width="1.8"/><rect x="1" y="7" width="10" height="9" fill="#202000"/><path d="M1 8.5h10M1 11h10M1 13.5h10" stroke="#E8D800" stroke-width="1.2"/></svg>
<div class="a" style="left:249px;top:622px;width:1px;height:22px;background:#808080;"></div>
<div class="a" style="left:250px;top:622px;width:1px;height:22px;background:#FFFFFF;"></div>
<svg class="a" style="left:257px;top:625px;" width="17" height="17" viewBox="0 0 17 17"><ellipse cx="4" cy="3.5" rx="2.5" ry="2" fill="#fff" stroke="#000"/><ellipse cx="12" cy="3.5" rx="2.5" ry="2" fill="#fff" stroke="#000"/><circle cx="4.5" cy="3.5" r="1.2" fill="#1838A8"/><circle cx="12.5" cy="3.5" r="1.2" fill="#1838A8"/><path d="M7.5 5v3h1.5M6 9.5h4" stroke="#000" fill="none"/><text x="2" y="16" font-size="6" font-weight="bold" font-family="Liberation Sans">ALL</text></svg>
<svg class="a" style="left:280px;top:625px;" width="17" height="17" viewBox="0 0 17 17"><path d="M1 2l2 1 2-1M10 2l2 1 2-1M7 5v2h2M5 10h5" fill="none" stroke="#000"/></svg>
<div class="a" style="left:304px;top:622px;width:1px;height:22px;background:#808080;"></div>
<div class="a" style="left:305px;top:622px;width:1px;height:22px;background:#FFFFFF;"></div>
<svg class="a" style="left:311px;top:625px;" width="17" height="17" viewBox="0 0 17 17"><circle cx="8" cy="5" r="3" fill="#FFFF00" stroke="#000" stroke-width="0.8"/><path d="M8 0v1.5M8 8.5v1.5M3 5h1.5M11.5 5H13M4.5 1.5l1 1M10.5 7.5l1 1M11.5 1.5l-1 1M4.5 8.5l1-1" stroke="#000"/><text x="2" y="16" font-size="6" font-weight="bold" font-family="Liberation Sans">ALL</text></svg>
<svg class="a" style="left:334px;top:625px;" width="17" height="17" viewBox="0 0 17 17"><path d="M13.0 5.5L3.0 5.5" stroke="#1838A8" stroke-width="1.1"/><path d="M11.5 9.0L4.5 2.0" stroke="#1838A8" stroke-width="1.1"/><path d="M8.0 10.5L8.0 0.5" stroke="#1838A8" stroke-width="1.1"/><path d="M4.5 9.0L11.5 2.0" stroke="#1838A8" stroke-width="1.1"/><circle cx="8" cy="5.5" r="2.2" fill="none" stroke="#1838A8" stroke-width="1.1"/><text x="2" y="16" font-size="6" font-weight="bold" font-family="Liberation Sans">ALL</text></svg>
<div class="a" style="left:360px;top:622px;width:1px;height:22px;background:#808080;"></div>
<div class="a" style="left:361px;top:622px;width:1px;height:22px;background:#FFFFFF;"></div>
<svg class="a" style="left:367px;top:625px;" width="17" height="17" viewBox="0 0 17 17"><path d="M9 7V4a3 3 0 0 1 6 0v2" fill="none" stroke="#000" stroke-width="1.3"/><rect x="1.5" y="7.5" width="9" height="7" rx="2" fill="#fff" stroke="#000" stroke-width="1.2"/><path d="M6 10v2" stroke="#000" stroke-width="1.5"/></svg>
<svg class="a" style="left:390px;top:625px;" width="17" height="17" viewBox="0 0 17 17"><path d="M5 7V4a3 3 0 0 1 6 0v3" fill="none" stroke="#000" stroke-width="1.3"/><rect x="3.5" y="7.5" width="9" height="7" rx="2" fill="#fff" stroke="#000" stroke-width="1.2"/><path d="M8 10v2" stroke="#000" stroke-width="1.5"/></svg>
<div class="a" style="left:415px;top:622px;width:1px;height:22px;background:#808080;"></div>
<div class="a" style="left:416px;top:622px;width:1px;height:22px;background:#FFFFFF;"></div>
<svg class="a" style="left:422px;top:625px;" width="17" height="17" viewBox="0 0 17 17"><path d="M4 5h11M4 9h11M4 13h11" stroke="#000" stroke-width="1.5"/><path d="M5 5h9M5 9h9" stroke="#1A8A40" stroke-width="1.5"/><circle cx="13" cy="3" r="2.5" fill="#F0E000" stroke="#000" stroke-width="0.6"/><path d="M7 6a4 4 0 1 0 0 8h4" fill="none" stroke="#E02020" stroke-width="1.8"/></svg>
<svg class="a" style="left:445px;top:625px;" width="17" height="17" viewBox="0 0 17 17"><circle cx="4" cy="11" r="3" fill="#F0E000" stroke="#000" stroke-width="0.8"/><path d="M8 8h7M8 11h7M8 14h7" stroke="#000"/><path d="M10 5l-5 4M5 7v2h2" stroke="#000" fill="none"/><circle cx="12" cy="3" r="2.5" fill="#fff" stroke="#000"/></svg>
<div class="a" style="left:473px;top:619px;width:132px;height:29px;background:#D4D0C8;"></div>
<div class="a" style="left:473px;top:619px;width:132px;height:1px;background:#FFFFFF;"></div>
<div class="a" style="left:473px;top:619px;width:1px;height:29px;background:#FFFFFF;"></div>
<div class="a" style="left:473px;top:647px;width:132px;height:1px;background:#808080;"></div>
<div class="a" style="left:604px;top:619px;width:1px;height:29px;background:#808080;"></div>
<div class="a" style="left:477px;top:621px;width:1px;height:25px;background:#FFFFFF;"></div>
<div class="a" style="left:478px;top:621px;width:1px;height:25px;background:#D4D0C8;"></div>
<div class="a" style="left:479px;top:621px;width:1px;height:25px;background:#808080;"></div>
<div class="a" style="left:477px;top:621px;width:3px;height:1px;background:#FFFFFF;"></div>
<div class="a" style="left:477px;top:645px;width:3px;height:1px;background:#808080;"></div>
<div class="a" style="left:481px;top:621px;width:1px;height:25px;background:#FFFFFF;"></div>
<div class="a" style="left:482px;top:621px;width:1px;height:25px;background:#D4D0C8;"></div>
<div class="a" style="left:483px;top:621px;width:1px;height:25px;background:#808080;"></div>
<div class="a" style="left:481px;top:621px;width:3px;height:1px;background:#FFFFFF;"></div>
<div class="a" style="left:481px;top:645px;width:3px;height:1px;background:#808080;"></div>
<svg class="a" style="left:486px;top:625px;" width="17" height="17" viewBox="0 0 17 17"><path d="M4 9h6l2-3h3l-1 4 2 1-2 2h-3l-1 3H4l-2-3z" fill="#F0B8C8" stroke="#208870" stroke-width="1"/><circle cx="5.5" cy="5" r="4.6" fill="#2050C0"/><path d="M2.5 3l2.5-1.5 2 1-1 2 2 2-2 2-1-2-2-1z" fill="#20A040"/><circle cx="14.5" cy="10.5" r="1.3" fill="#10A090"/></svg>
<svg class="a" style="left:509px;top:625px;" width="17" height="17" viewBox="0 0 17 17"><rect x="0.5" y="0.5" width="15" height="15" fill="#F4F4F4" stroke="#404040"/><path d="M1 10q7-9 14 0" fill="none" stroke="#F08040" stroke-width="1.1"/><path d="M1 15q7-9 14 0" fill="none" stroke="#A06040" stroke-width="1.1"/><text x="5.5" y="9" font-size="7.5" font-weight="bold" fill="#6060E0" font-family="Liberation Sans">10</text></svg>
<svg class="a" style="left:532px;top:625px;" width="17" height="17" viewBox="0 0 17 17"><defs><linearGradient id="rb2"><stop offset="0" stop-color="#F00"/><stop offset=".2" stop-color="#FF0"/><stop offset=".4" stop-color="#0F0"/><stop offset=".6" stop-color="#0FF"/><stop offset=".8" stop-color="#00F"/><stop offset="1" stop-color="#F0F"/></linearGradient></defs><rect x="2" y="0" width="13" height="3.5" fill="url(#rb2)"/><rect x="1" y="4" width="14" height="5" fill="#C8A8C8"/><path d="M1 5h5l6 3 3 2-2 1-9-2z" fill="#E0A0A0" stroke="#A07070" stroke-width="0.5"/><rect x="1" y="4" width="2" height="5" fill="#508060"/><path d="M1.5 10.5h6M4.5 10.5v5M3 15.5h3" stroke="#000" stroke-width="1.6"/><path d="M10 11.5h5M10 13.5h5M10 15.5h5" stroke="#709880" stroke-width="1.2"/></svg>
<svg class="a" style="left:555px;top:625px;" width="17" height="17" viewBox="0 0 17 17"><path d="M1 4l1-2h5l1 2h6v10H1z" fill="#E8C050" stroke="#A88020" stroke-width="0.8"/><path d="M3 6h13l-2 8H1z" fill="#F4D878" stroke="#A88020" stroke-width="0.8"/><circle cx="8" cy="9" r="3.6" fill="#C8ECF8" stroke="#7890A0" stroke-width="1.1"/><path d="M10.5 11.5l3.5 3" stroke="#A05828" stroke-width="1.8"/></svg>
<svg class="a" style="left:578px;top:625px;" width="17" height="17" viewBox="0 0 17 17"><circle cx="11" cy="5" r="4.6" fill="#8090E0"/><circle cx="10" cy="4" r="1.8" fill="#B8C8F8"/><path d="M11 1.5v3" stroke="#E8D040" stroke-width="1.5"/><path d="M1 8.5h5l-4 5.5h7" fill="none" stroke="#E01818" stroke-width="2"/><path d="M6 9l3 2" stroke="#fff" stroke-width="1.2"/><path d="M2.5 15.5h6" stroke="#000"/></svg>
<div class="a" style="left:0px;top:648px;width:110px;height:30px;background:#D4D0C8;"></div>
<div class="a" style="left:0px;top:648px;width:110px;height:1px;background:#FFFFFF;"></div>
<div class="a" style="left:0px;top:648px;width:1px;height:30px;background:#FFFFFF;"></div>
<div class="a" style="left:0px;top:677px;width:110px;height:1px;background:#808080;"></div>
<div class="a" style="left:109px;top:648px;width:1px;height:30px;background:#808080;"></div>
<div class="a" style="left:4px;top:650px;width:1px;height:26px;background:#FFFFFF;"></div>
<div class="a" style="left:5px;top:650px;width:1px;height:26px;background:#D4D0C8;"></div>
<div class="a" style="left:6px;top:650px;width:1px;height:26px;background:#808080;"></div>
<div class="a" style="left:4px;top:650px;width:3px;height:1px;background:#FFFFFF;"></div>
<div class="a" style="left:4px;top:675px;width:3px;height:1px;background:#808080;"></div>
<div class="a" style="left:8px;top:650px;width:1px;height:26px;background:#FFFFFF;"></div>
<div class="a" style="left:9px;top:650px;width:1px;height:26px;background:#D4D0C8;"></div>
<div class="a" style="left:10px;top:650px;width:1px;height:26px;background:#808080;"></div>
<div class="a" style="left:8px;top:650px;width:3px;height:1px;background:#FFFFFF;"></div>
<div class="a" style="left:8px;top:675px;width:3px;height:1px;background:#808080;"></div>
<svg class="a" style="left:14px;top:654px;" width="17" height="17" viewBox="0 0 17 17"><path d="M3.5 1L1 6.5a2.5 2.5 0 0 0 5 0z" fill="#fff" stroke="#000" stroke-width="1.1"/><path d="M7 0.5q4 0 6 4" fill="none" stroke="#F02020" stroke-width="1.3"/><path d="M11.5 3.5l2 1.5 0.5-2z" fill="#F02020"/><path d="M5 15.5L15.5 3v12.5z" fill="#30E8F8"/><path d="M10.5 8L7.5 14a3 2 0 0 0 6 0z" fill="#F8F000" stroke="#000" stroke-width="1.1"/><path d="M13 15h2.5" stroke="#6020A0"/></svg>
<svg class="a" style="left:37px;top:654px;" width="17" height="17" viewBox="0 0 17 17"><circle cx="7" cy="8" r="6.8" fill="#40F010" stroke="#000" stroke-width="1.1"/><path d="M12.5 6a6 6 0 0 1-6 8" fill="none" stroke="#B08020" stroke-width="1"/><path d="M3 5l3 2M6 3.5v3M4 8l2-1" stroke="#E8FF80" stroke-width="0.8"/></svg>
<svg class="a" style="left:60px;top:654px;" width="17" height="17" viewBox="0 0 17 17"><rect x="0" y="0" width="4" height="4" fill="#000080"/><rect x="4" y="0" width="4" height="4" fill="#F8F000"/><rect x="0" y="4" width="4" height="4" fill="#F8F000"/><rect x="4" y="4" width="4" height="4" fill="#000080"/><path d="M8.5 0.5q3.5 0 5 4" fill="none" stroke="#F02020" stroke-width="1.3"/><path d="M12 4l2 1.5 0.5-2.5z" fill="#F02020"/><path d="M8.5 9.5l2-2h5v6l-2 2h-5z" fill="#20D020" stroke="#000" stroke-width="1.1"/><path d="M13.5 9.5l2-2M13.5 9.5v6" stroke="#802000" stroke-width="0.8"/></svg>
<svg class="a" style="left:83px;top:654px;" width="17" height="17" viewBox="0 0 17 17"><path d="M3.5 0.5L0.5 7a3 2 0 0 0 6 0z" fill="#30C030" stroke="#000" stroke-width="1.1"/><rect x="9" y="1" width="6" height="5" fill="#fff"/><path d="M10 3l1.5 2 3-4" fill="none" stroke="#000" stroke-width="1.4"/><path d="M7.5 9.5h7l1 2-3 4h-6z" fill="#F0E040" stroke="#000" stroke-width="1"/><path d="M7 12h8" stroke="#806000" stroke-width="0.8"/></svg>
<div class="a" style="left:0px;top:679px;width:1024px;height:1px;background:#FFFFFF;"></div>
<div class="a" style="left:0px;top:683px;width:1024px;height:1px;background:#808080;"></div>
<div class="a" style="left:3px;top:688px;width:1017px;height:49px;background:#FFFFFF;"></div>
<div class="a" style="left:3px;top:688px;width:1016px;height:1px;background:#808080;"></div>
<div class="a" style="left:3px;top:688px;width:1px;height:48px;background:#808080;"></div>
<div class="a" style="left:4px;top:689px;width:1014px;height:1px;background:#404040;"></div>
<div class="a" style="left:4px;top:689px;width:1px;height:46px;background:#404040;"></div>
<div class="a" style="left:3px;top:736px;width:1017px;height:1px;background:#FFFFFF;"></div>
<div class="a" style="left:1019px;top:688px;width:1px;height:49px;background:#FFFFFF;"></div>
<div class="a" style="left:4px;top:735px;width:1015px;height:1px;background:#D4D0C8;"></div>
<div class="a" style="left:1018px;top:689px;width:1px;height:47px;background:#D4D0C8;"></div>
<div class="a" style="left:5px;top:715px;width:1012px;height:1px;background:#000;"></div>
<div class="a" style="left:1003px;top:690px;width:15px;height:12px;background:#D4D0C8;"></div>
<div class="a" style="left:1004px;top:691px;width:13px;height:1px;background:#FFFFFF;"></div>
<div class="a" style="left:1004px;top:691px;width:1px;height:10px;background:#FFFFFF;"></div>
<div class="a" style="left:1003px;top:701px;width:15px;height:1px;background:#404040;"></div>
<div class="a" style="left:1017px;top:690px;width:1px;height:12px;background:#404040;"></div>
<div class="a" style="left:1004px;top:700px;width:13px;height:1px;background:#808080;"></div>
<div class="a" style="left:1016px;top:691px;width:1px;height:10px;background:#808080;"></div>
<svg class="a" style="left:1003px;top:690px;" width="15" height="12" viewBox="0 0 15 12"><path d="M7.5 3l3.5 4h-7z" fill="#000"/></svg>
<div class="a" style="left:1003px;top:702px;width:15px;height:13px;background:#D4D0C8;"></div>
<div class="a" style="left:1004px;top:703px;width:13px;height:1px;background:#FFFFFF;"></div>
<div class="a" style="left:1004px;top:703px;width:1px;height:11px;background:#FFFFFF;"></div>
<div class="a" style="left:1003px;top:714px;width:15px;height:1px;background:#404040;"></div>
<div class="a" style="left:1017px;top:702px;width:1px;height:13px;background:#404040;"></div>
<div class="a" style="left:1004px;top:713px;width:13px;height:1px;background:#808080;"></div>
<div class="a" style="left:1016px;top:703px;width:1px;height:11px;background:#808080;"></div>
<svg class="a" style="left:1003px;top:702px;" width="15" height="13" viewBox="0 0 15 13"><path d="M4 5h7l-3.5 4z" fill="#000"/></svg>
<div class="t" style="left:6px;top:692px;font-size:12px;line-height:15px;color:#000;font-family:'Liberation Mono';letter-spacing:0.8px;">C:\DOCUME~1\pepik\LOCALS~1\Temp\vykres.SV$</div>
<div class="t" style="left:6px;top:719px;font-size:12px;line-height:15px;color:#000;font-family:'Liberation Mono';font-weight:bold;letter-spacing:0.8px;">Příkaz:</div>
<div class="a" style="left:0px;top:740px;width:1024px;height:1px;background:#000;"></div>
<div class="a" style="left:0px;top:741px;width:1024px;height:1px;background:#000;"></div>
<div class="a" style="left:0px;top:743px;width:1024px;height:1px;background:#FFFFFF;"></div>
<div class="a" style="left:0px;top:764px;width:1024px;height:1px;background:#FFFFFF;"></div>
<div class="t" style="left:1px;top:748px;font-size:11px;line-height:13px;color:#000;font-family:'Liberation Sans';">Zobrazí internetový obchod</div>
<div class="a" style="left:510px;top:745px;width:201px;height:17px;background:#D4D0C8;"></div>
<div class="a" style="left:510px;top:745px;width:201px;height:1px;background:#808080;"></div>
<div class="a" style="left:510px;top:745px;width:1px;height:17px;background:#808080;"></div>
<div class="a" style="left:510px;top:761px;width:201px;height:1px;background:#FFFFFF;"></div>
<div class="a" style="left:710px;top:745px;width:1px;height:17px;background:#FFFFFF;"></div>
<div class="t" style="left:511px;top:748px;font-size:11px;line-height:13px;color:#000;font-family:'Liberation Sans';">282.7757,174.8331,0</div>
<div class="a" style="left:713px;top:745px;width:33px;height:17px;background:#D4D0C8;"></div>
<div class="a" style="left:713px;top:745px;width:33px;height:1px;background:#FFFFFF;"></div>
<div class="a" style="left:713px;top:745px;width:1px;height:17px;background:#FFFFFF;"></div>
<div class="a" style="left:713px;top:761px;width:33px;height:1px;background:#808080;"></div>
<div class="a" style="left:745px;top:745px;width:1px;height:17px;background:#808080;"></div>
<div class="t" style="left:714px;top:748px;font-size:11px;line-height:13px;color:#000;font-family:'Liberation Sans';transform:scaleX(0.92);transform-origin:0 0;">KROK</div>
<div class="a" style="left:748px;top:745px;width:39px;height:17px;background:#D4D0C8;"></div>
<div class="a" style="left:748px;top:745px;width:39px;height:1px;background:#FFFFFF;"></div>
<div class="a" style="left:748px;top:745px;width:1px;height:17px;background:#FFFFFF;"></div>
<div class="a" style="left:748px;top:761px;width:39px;height:1px;background:#808080;"></div>
<div class="a" style="left:786px;top:745px;width:1px;height:17px;background:#808080;"></div>
<div class="t" style="left:749px;top:748px;font-size:11px;line-height:13px;color:#000;font-family:'Liberation Sans';transform:scaleX(0.92);transform-origin:0 0;">RASTR</div>
<div class="a" style="left:789px;top:745px;width:41px;height:17px;background:#D4D0C8;"></div>
<div class="a" style="left:789px;top:745px;width:41px;height:1px;background:#FFFFFF;"></div>
<div class="a" style="left:789px;top:745px;width:1px;height:17px;background:#FFFFFF;"></div>
<div class="a" style="left:789px;top:761px;width:41px;height:1px;background:#808080;"></div>
<div class="a" style="left:829px;top:745px;width:1px;height:17px;background:#808080;"></div>
<div class="t" style="left:790px;top:748px;font-size:11px;line-height:13px;color:#000;font-family:'Liberation Sans';transform:scaleX(0.92);transform-origin:0 0;">KOLMO</div>
<div class="a" style="left:832px;top:745px;width:41px;height:17px;background:#D4D0C8;"></div>
<div class="a" style="left:832px;top:745px;width:41px;height:1px;background:#808080;"></div>
<div class="a" style="left:832px;top:745px;width:1px;height:17px;background:#808080;"></div>
<div class="a" style="left:832px;top:761px;width:41px;height:1px;background:#FFFFFF;"></div>
<div class="a" style="left:872px;top:745px;width:1px;height:17px;background:#FFFFFF;"></div>
<div class="t" style="left:833px;top:748px;font-size:11px;line-height:13px;color:#000;font-family:'Liberation Sans';transform:scaleX(0.92);transform-origin:0 0;">UCHOP</div>
<div class="a" style="left:875px;top:745px;width:24px;height:17px;background:#D4D0C8;"></div>
<div class="a" style="left:875px;top:745px;width:24px;height:1px;background:#FFFFFF;"></div>
<div class="a" style="left:875px;top:745px;width:1px;height:17px;background:#FFFFFF;"></div>
<div class="a" style="left:875px;top:761px;width:24px;height:1px;background:#808080;"></div>
<div class="a" style="left:898px;top:745px;width:1px;height:17px;background:#808080;"></div>
<div class="t" style="left:876px;top:748px;font-size:11px;line-height:13px;color:#000;font-family:'Liberation Sans';transform:scaleX(0.92);transform-origin:0 0;">TLČ</div>
<div class="a" style="left:901px;top:745px;width:40px;height:17px;background:#D4D0C8;"></div>
<div class="a" style="left:901px;top:745px;width:40px;height:1px;background:#808080;"></div>
<div class="a" style="left:901px;top:745px;width:1px;height:17px;background:#808080;"></div>
<div class="a" style="left:901px;top:761px;width:40px;height:1px;background:#FFFFFF;"></div>
<div class="a" style="left:940px;top:745px;width:1px;height:17px;background:#FFFFFF;"></div>
<div class="t" style="left:902px;top:748px;font-size:11px;line-height:13px;color:#000;font-family:'Liberation Sans';transform:scaleX(0.92);transform-origin:0 0;">MODEL</div>
<div class="a" style="left:942px;top:745px;width:41px;height:17px;background:#D4D0C8;"></div>
<div class="a" style="left:942px;top:745px;width:41px;height:1px;background:#808080;"></div>
<div class="a" style="left:942px;top:745px;width:1px;height:17px;background:#808080;"></div>
<div class="a" style="left:942px;top:761px;width:41px;height:1px;background:#FFFFFF;"></div>
<div class="a" style="left:982px;top:745px;width:1px;height:17px;background:#FFFFFF;"></div>
<div class="t" style="left:943px;top:748px;font-size:11px;line-height:13px;color:#000;font-family:'Liberation Sans';transform:scaleX(0.92);transform-origin:0 0;">OTRAS</div>
<div class="a" style="left:984px;top:745px;width:39px;height:17px;background:#D4D0C8;"></div>
<div class="a" style="left:984px;top:745px;width:39px;height:1px;background:#808080;"></div>
<div class="a" style="left:984px;top:745px;width:1px;height:17px;background:#808080;"></div>
<div class="a" style="left:984px;top:761px;width:39px;height:1px;background:#FFFFFF;"></div>
<div class="a" style="left:1022px;top:745px;width:1px;height:17px;background:#FFFFFF;"></div>
<div class="t" style="left:985px;top:748px;font-size:11px;line-height:13px;color:#000;font-family:'Liberation Sans';transform:scaleX(0.92);transform-origin:0 0;">POLÁR</div>
<div class="a" style="left:113px;top:37px;width:168px;height:420px;background:#D4D0C8;"></div>
<div class="a" style="left:113px;top:37px;width:168px;height:1px;background:#D4D0C8;"></div>
<div class="a" style="left:113px;top:37px;width:1px;height:420px;background:#D4D0C8;"></div>
<div class="a" style="left:114px;top:38px;width:166px;height:1px;background:#FFFFFF;"></div>
<div class="a" style="left:114px;top:38px;width:1px;height:418px;background:#FFFFFF;"></div>
<div class="a" style="left:113px;top:456px;width:168px;height:1px;background:#404040;"></div>
<div class="a" style="left:280px;top:37px;width:1px;height:420px;background:#404040;"></div>
<div class="a" style="left:114px;top:455px;width:166px;height:1px;background:#808080;"></div>
<div class="a" style="left:279px;top:38px;width:1px;height:418px;background:#808080;"></div>
<svg class="a" style="left:118px;top:42px;" width="17" height="17" viewBox="0 0 17 17"><path d="M1 2.5L9 9.5" stroke="#000" stroke-width="3.2"/><path d="M1.3 2.3L8.5 8.8" stroke="#F020F0" stroke-width="1.8"/><path d="M9.5 9.5l1 0.5" stroke="#E0D040"/><path d="M10 9.5L15.5 4" stroke="#000" stroke-width="1.3"/><path d="M9.5 10.5L4 15" stroke="#909090" stroke-width="1.2"/></svg>
<div class="t" style="left:139px;top:44px;font-size:11px;line-height:13px;color:#000;font-family:'Liberation Sans';">Překreslit</div>
<svg class="a" style="left:118px;top:62px;" width="17" height="17" viewBox="0 0 17 17"><rect x="2.5" y="2.5" width="11" height="11" fill="#fff" stroke="#000"/><path d="M3 3h10L3 13z" fill="#A8C0B0"/><path d="M1 15L15 1" stroke="#00A8A0" stroke-width="2"/><path d="M1 15L15 1" stroke="#000" stroke-width="0.6"/></svg>
<div class="t" style="left:139px;top:64px;font-size:11px;line-height:13px;color:#000;font-family:'Liberation Sans';">Obnovit</div>
<svg class="a" style="left:118px;top:82px;" width="17" height="17" viewBox="0 0 17 17"><rect x="1.5" y="2.5" width="6" height="6" fill="#A8C0B0" stroke="#000"/><rect x="7.5" y="2.5" width="6" height="6" fill="#fff" stroke="#000"/><rect x="1.5" y="8.5" width="6" height="6" fill="#fff" stroke="#000"/><rect x="7.5" y="8.5" width="6" height="6" fill="#fff" stroke="#000" stroke-dasharray="1 1"/><path d="M1 15L15 1" stroke="#00A8A0" stroke-width="2"/><path d="M1 15L15 1" stroke="#000" stroke-width="0.6"/></svg>
<div class="t" style="left:139px;top:84px;font-size:11px;line-height:13px;color:#000;font-family:'Liberation Sans';">Obnovit vše</div>
<div class="a" style="left:117px;top:103px;width:160px;height:1px;background:#808080;"></div>
<div class="a" style="left:117px;top:104px;width:160px;height:1px;background:#FFFFFF;"></div>
<div class="t" style="left:139px;top:113px;font-size:11px;line-height:13px;color:#000;font-family:'Liberation Sans';">Lupa</div>
<svg class="a" style="left:268px;top:114px;" width="5" height="8" viewBox="0 0 5 8"><path d="M0 0l4 4-4 4z" fill="#000"/></svg>
<div class="t" style="left:139px;top:133px;font-size:11px;line-height:13px;color:#000;font-family:'Liberation Sans';">Posun</div>
<svg class="a" style="left:268px;top:134px;" width="5" height="8" viewBox="0 0 5 8"><path d="M0 0l4 4-4 4z" fill="#000"/></svg>
<div class="t" style="left:139px;top:153px;font-size:11px;line-height:13px;color:#000;font-family:'Liberation Sans';">3D Orbit</div>
<svg class="a" style="left:268px;top:154px;" width="5" height="8" viewBox="0 0 5 8"><path d="M0 0l4 4-4 4z" fill="#000"/></svg>
<div class="a" style="left:117px;top:172px;width:160px;height:1px;background:#808080;"></div>
<div class="a" style="left:117px;top:173px;width:160px;height:1px;background:#FFFFFF;"></div>
<div class="t" style="left:139px;top:182px;font-size:11px;line-height:13px;color:#000;font-family:'Liberation Sans';">Výřezy</div>
<svg class="a" style="left:268px;top:183px;" width="5" height="8" viewBox="0 0 5 8"><path d="M0 0l4 4-4 4z" fill="#000"/></svg>
<svg class="a" style="left:118px;top:200px;" width="17" height="17" viewBox="0 0 17 17"><path d="M3 5V1h9l3 3v6" fill="#fff" stroke="#5E8C74"/><path d="M1 6h12v9H1z" fill="#5E8C74" stroke="#1A4A30"/><path d="M3 9h8M3 12h8" stroke="#D8E8E0"/><circle cx="9" cy="5" r="3" fill="none" stroke="#404040"/><path d="M11 7l4 4" stroke="#A03070" stroke-width="1.5"/></svg>
<div class="t" style="left:139px;top:202px;font-size:11px;line-height:13px;color:#000;font-family:'Liberation Sans';">Vlastní pohledy...</div>
<div class="t" style="left:139px;top:222px;font-size:11px;line-height:13px;color:#000;font-family:'Liberation Sans';">3D pohledy</div>
<svg class="a" style="left:268px;top:223px;" width="5" height="8" viewBox="0 0 5 8"><path d="M0 0l4 4-4 4z" fill="#000"/></svg>
<div class="t" style="left:139px;top:242px;font-size:11px;line-height:13px;color:#000;font-family:'Liberation Sans';">Dynamický pohled</div>
<svg class="a" style="left:118px;top:260px;" width="17" height="17" viewBox="0 0 17 17"><path d="M1.5 4.5h10v10h-10zM4.5 1.5h10v10h-10zM1.5 4.5l3-3M11.5 4.5l3-3M1.5 14.5l3-3M11.5 14.5l3-3" fill="none" stroke="#909090"/></svg>
<div class="t" style="left:139px;top:262px;font-size:11px;line-height:13px;color:#000;font-family:'Liberation Sans';">Předvolby pohledů</div>
<div class="a" style="left:117px;top:281px;width:160px;height:1px;background:#808080;"></div>
<div class="a" style="left:117px;top:282px;width:160px;height:1px;background:#FFFFFF;"></div>
<div class="t" style="left:139px;top:291px;font-size:11px;line-height:13px;color:#000;font-family:'Liberation Sans';">Pracovní prostory...</div>
<svg class="a" style="left:118px;top:309px;" width="17" height="17" viewBox="0 0 17 17"><rect x="3.5" y="0.5" width="12" height="10" fill="#D8E8E0" stroke="#5E8C74"/><rect x="5" y="2" width="4" height="4" fill="#5E8C74"/><rect x="10" y="2" width="4" height="4" fill="#5E8C74"/><rect x="0.5" y="6.5" width="10" height="9" fill="#E8F0EC" stroke="#1E5A3C"/><path d="M2 9h7M2 11h7M2 13h5" stroke="#5E8C74"/></svg>
<div class="t" style="left:139px;top:311px;font-size:11px;line-height:13px;color:#000;font-family:'Liberation Sans';">Rozvržení papíru</div>
<div class="a" style="left:117px;top:330px;width:160px;height:1px;background:#808080;"></div>
<div class="a" style="left:117px;top:331px;width:160px;height:1px;background:#FFFFFF;"></div>
<svg class="a" style="left:118px;top:338px;" width="17" height="17" viewBox="0 0 17 17"><path d="M1 7l5-3 9 2v6l-6 3-8-3z" fill="#2A7A5A"/><path d="M1 7l8 3 6-3" fill="#50A080"/><path d="M1 7l5-3 9 2-6 3z" fill="#80C0A0"/><ellipse cx="8" cy="4" rx="3" ry="3" fill="#E080E0"/><ellipse cx="8" cy="3" rx="2" ry="1.5" fill="#F8C0F8"/></svg>
<div class="t" style="left:139px;top:340px;font-size:11px;line-height:13px;color:#000;font-family:'Liberation Sans';">Skrýt</div>
<div class="a" style="left:116px;top:356px;width:160px;height:20px;background:#0A246A;"></div>
<div class="t" style="left:139px;top:360px;font-size:11px;line-height:13px;color:#fff;font-family:'Liberation Sans';">Stín</div>
<svg class="a" style="left:268px;top:361px;" width="5" height="8" viewBox="0 0 5 8"><path d="M0 0l4 4-4 4z" fill="#fff"/></svg>
<div class="a" style="left:117px;top:379px;width:160px;height:1px;background:#808080;"></div>
<div class="a" style="left:117px;top:380px;width:160px;height:1px;background:#FFFFFF;"></div>
<div class="t" style="left:139px;top:389px;font-size:11px;line-height:13px;color:#000;font-family:'Liberation Sans';">Vykreslit</div>
<svg class="a" style="left:268px;top:390px;" width="5" height="8" viewBox="0 0 5 8"><path d="M0 0l4 4-4 4z" fill="#000"/></svg>
<div class="a" style="left:117px;top:408px;width:160px;height:1px;background:#808080;"></div>
<div class="a" style="left:117px;top:409px;width:160px;height:1px;background:#FFFFFF;"></div>
<div class="t" style="left:139px;top:418px;font-size:11px;line-height:13px;color:#000;font-family:'Liberation Sans';">Zobrazit</div>
<svg class="a" style="left:268px;top:419px;" width="5" height="8" viewBox="0 0 5 8"><path d="M0 0l4 4-4 4z" fill="#000"/></svg>
<div class="t" style="left:139px;top:438px;font-size:11px;line-height:13px;color:#000;font-family:'Liberation Sans';">Panely nástrojů</div>
<div class="a" style="left:275px;top:353px;width:197px;height:86px;background:#D4D0C8;"></div>
<div class="a" style="left:275px;top:353px;width:197px;height:1px;background:#D4D0C8;"></div>
<div class="a" style="left:275px;top:353px;width:1px;height:86px;background:#D4D0C8;"></div>
<div class="a" style="left:276px;top:354px;width:195px;height:1px;background:#FFFFFF;"></div>
<div class="a" style="left:276px;top:354px;width:1px;height:84px;background:#FFFFFF;"></div>
<div class="a" style="left:275px;top:438px;width:197px;height:1px;background:#404040;"></div>
<div class="a" style="left:471px;top:353px;width:1px;height:86px;background:#404040;"></div>
<div class="a" style="left:276px;top:437px;width:195px;height:1px;background:#808080;"></div>
<div class="a" style="left:470px;top:354px;width:1px;height:84px;background:#808080;"></div>
<svg class="a" style="left:280px;top:358px;" width="17" height="17" viewBox="0 0 17 17"><path d="M1 4l8-3 7 3-8 3z" fill="#B0D0C0"/><path d="M1 4l7 3v9l-7-3z" fill="#5A9078"/><path d="M8 7l8-3v9l-8 3z" fill="#88B8A0"/></svg>
<div class="t" style="left:301px;top:360px;font-size:11px;line-height:13px;color:#000;font-family:'Liberation Sans';">256 barev</div>
<svg class="a" style="left:280px;top:378px;" width="17" height="17" viewBox="0 0 17 17"><path d="M2 4l6-3 6 3-6 3z" fill="#C0D8CC" stroke="#6A9A84" stroke-width="0.7"/><path d="M2 4l6 3v8l-6-3z" fill="#5A9078" stroke="#3A6A54" stroke-width="0.7"/><path d="M8 7l6-3v8l-6 3z" fill="#88B8A0" stroke="#3A6A54" stroke-width="0.7"/></svg>
<div class="t" style="left:301px;top:380px;font-size:11px;line-height:13px;color:#000;font-family:'Liberation Sans';">Zvýrazněné obrysy 256 barev</div>
<div class="t" style="left:301px;top:400px;font-size:11px;line-height:13px;color:#000;font-family:'Liberation Sans';">Skryté čáry 16 barev</div>
<div class="t" style="left:301px;top:420px;font-size:11px;line-height:13px;color:#000;font-family:'Liberation Sans';">16 barev</div>
</body></html>
